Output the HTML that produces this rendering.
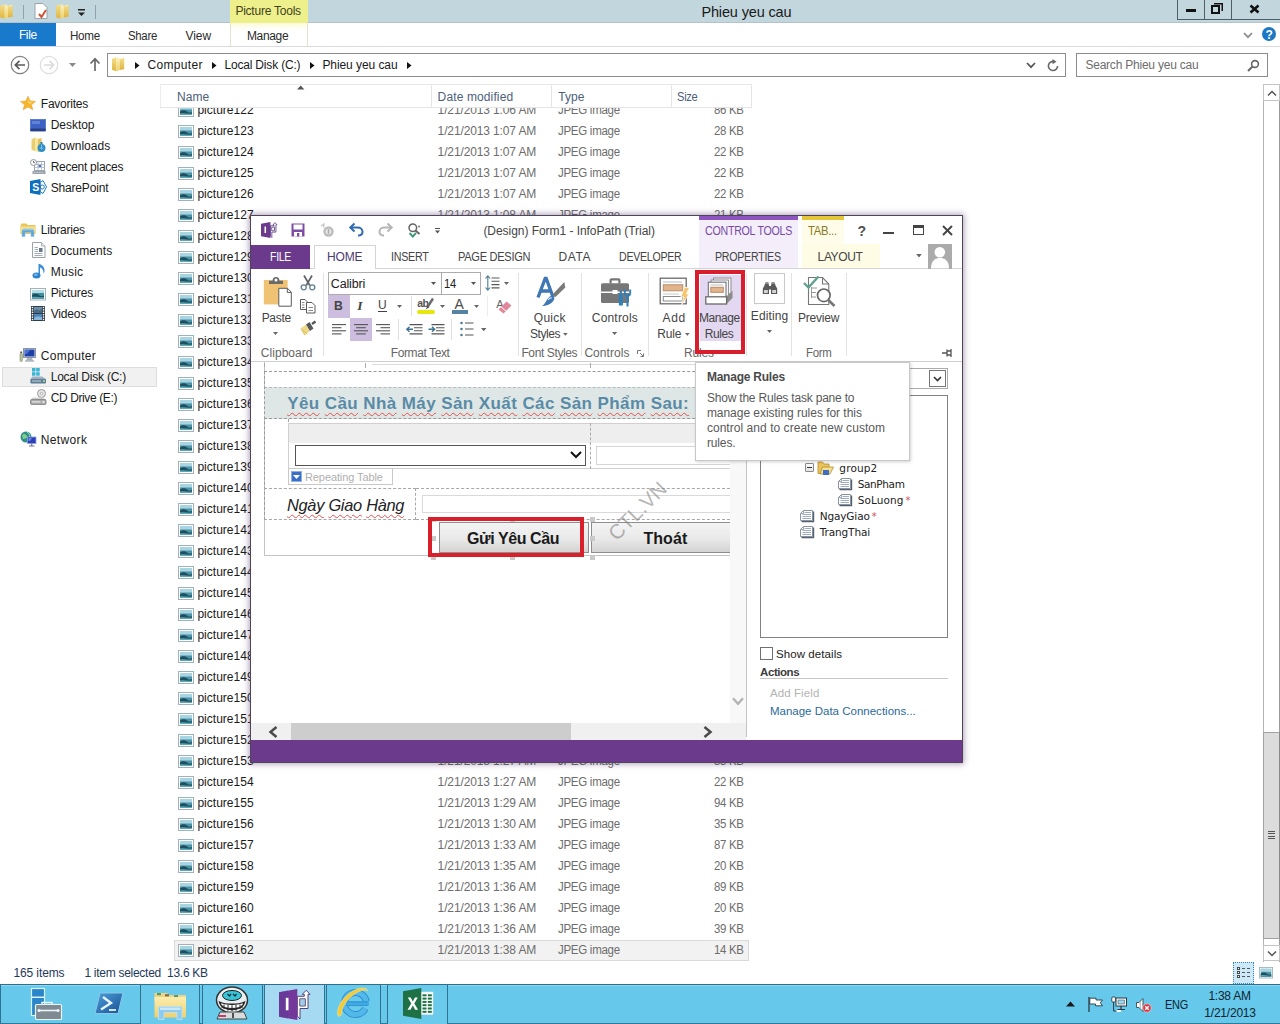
<!DOCTYPE html>
<html lang="vi"><head><meta charset="utf-8"><title>Phieu yeu cau</title>
<style>
html,body{margin:0;padding:0;}
body{width:1280px;height:1024px;overflow:hidden;background:#fff;font-family:"Liberation Sans","DejaVu Sans",sans-serif;}
#root{position:relative;width:1280px;height:1024px;overflow:hidden;background:#fff;}
.b{position:absolute;box-sizing:border-box;}
.t{position:absolute;white-space:pre;}
svg{position:absolute;overflow:visible;}
.sq{text-decoration:underline wavy #e2504c 1.3px;text-underline-offset:2.5px;text-decoration-skip-ink:none;}
</style></head><body><div id="root">
<div class="b" style="left:0px;top:0px;width:1280px;height:23px;background:#c2d6dd;"></div>
<div class="b" style="left:0px;top:22px;width:1280px;height:1px;background:#b3c3c9;"></div>
<svg width="0" height="0" style="left:0;top:0"><defs><linearGradient id="fgA" x1="0" y1="0" x2="0" y2="1"><stop offset="0" stop-color="#f3df8e"/><stop offset="1" stop-color="#dfb440"/></linearGradient><linearGradient id="fgB" x1="0" y1="0" x2="0" y2="1"><stop offset="0" stop-color="#fbf1b8"/><stop offset="1" stop-color="#efd068"/></linearGradient></defs></svg>
<svg style="left:0px;top:3.5px" width="13" height="15" viewBox="0 0 13 15"><path d="M0 1.800L4.500 0.300V14.700L0 13.200Z" fill="url(#fgA)"/><path d="M4.500 0.300L8 1.800V13.500L4.500 14.700Z" fill="url(#fgB)"/><path d="M8 1.800L12.700 0.800V12.800L8 13.500Z" fill="url(#fgA)"/><path d="M8.300 2.200L12.400 1.300" stroke="#fff6cf" stroke-width="0.600"/></svg>
<div class="b" style="left:23px;top:5px;width:1px;height:14px;background:#8fa3ad;"></div>
<svg style="left:34px;top:3px" width="15" height="17" viewBox="0 0 15 17"><path d="M1 .5H9L13 4.500V15.500H1Z" fill="#fff" stroke="#9aa4aa"/><path d="M5 11l2.500 3L12 7" fill="none" stroke="#d2553a" stroke-width="2"/></svg>
<svg style="left:56px;top:3.5px" width="13" height="15" viewBox="0 0 13 15"><path d="M0 1.800L4.500 0.300V14.700L0 13.200Z" fill="url(#fgA)"/><path d="M4.500 0.300L8 1.800V13.500L4.500 14.700Z" fill="url(#fgB)"/><path d="M8 1.800L12.700 0.800V12.800L8 13.500Z" fill="url(#fgA)"/><path d="M8.300 2.200L12.400 1.300" stroke="#fff6cf" stroke-width="0.600"/></svg>
<svg style="left:78px;top:9px" width="8" height="8" viewBox="0 0 8 8"><path d="M0 0H7V1.500H0Z M0 3.500H7L3.500 7Z" fill="#222"/></svg>
<div class="b" style="left:95px;top:5px;width:1px;height:14px;background:#8fa3ad;"></div>
<div class="b" style="left:230px;top:0px;width:77.5px;height:23px;background:#eef08c;"></div>
<span class="t " style="left:235.4px;top:2.5px;font-size:12px;color:#42421c;line-height:16px;letter-spacing:-0.231px;">Picture Tools</span>
<span class="t " style="left:701.4px;top:2.5px;font-size:14.5px;color:#1a1a1a;line-height:18px;letter-spacing:-0.141px;">Phieu yeu cau</span>
<div class="b" style="left:1177px;top:-1px;width:104px;height:21px;border:1px solid #4f5f68;"></div>
<div class="b" style="left:1204px;top:0px;width:1px;height:19px;background:#4f5f68;"></div>
<div class="b" style="left:1231px;top:0px;width:1px;height:19px;background:#4f5f68;"></div>
<div class="b" style="left:1186px;top:9px;width:10px;height:3px;background:#111;"></div>
<svg style="left:1211px;top:3px" width="12" height="11" viewBox="0 0 12 11"><path d="M3 0.750H11.250V8" fill="none" stroke="#111" stroke-width="1.500"/><rect x="1" y="3" width="7" height="7" fill="none" stroke="#111" stroke-width="2"/></svg>
<svg style="left:1249px;top:5px" width="11" height="8" viewBox="0 0 11 8"><path d="M1.500 0.500L9.500 7.500M9.500 .5L1.500 7.500" stroke="#111" stroke-width="2.600"/></svg>
<div class="b" style="left:0px;top:23px;width:1280px;height:24px;background:#fff;"></div>
<div class="b" style="left:0px;top:46px;width:1280px;height:1px;background:#dadbdc;"></div>
<div class="b" style="left:0px;top:23px;width:56px;height:23px;background:#1979ca;"></div>
<span class="t " style="left:18.9px;top:27px;font-size:12px;color:#fff;line-height:16px;letter-spacing:-0.378px;">File</span>
<span class="t " style="left:69.9px;top:27.5px;font-size:12px;color:#2b2b2b;line-height:16px;letter-spacing:-0.3px;transform:scaleX(0.9708);transform-origin:0 50%;">Home</span>
<span class="t " style="left:127.9px;top:27.5px;font-size:12px;color:#2b2b2b;line-height:16px;letter-spacing:-0.3px;transform:scaleX(0.9475);transform-origin:0 50%;">Share</span>
<span class="t " style="left:185.4px;top:27.5px;font-size:12px;color:#2b2b2b;line-height:16px;letter-spacing:-0.031px;">View</span>
<span class="t " style="left:246.9px;top:27.5px;font-size:12px;color:#2b2b2b;line-height:16px;letter-spacing:-0.332px;">Manage</span>
<div class="b" style="left:230px;top:23px;width:77.5px;height:7px;background:linear-gradient(#fbfbd9,#ffffff);"></div>
<div class="b" style="left:230px;top:23px;width:1px;height:23px;background:#e3e3cf;"></div>
<div class="b" style="left:307px;top:23px;width:1px;height:23px;background:#e3e3cf;"></div>
<svg style="left:1242.500px;top:31.500px" width="10" height="7" viewBox="0 0 10 7"><path d="M1 1L5 5.200L9 1" fill="none" stroke="#8a8a8a" stroke-width="1.700"/></svg>
<div class="b" style="left:1262px;top:27px;width:14px;height:14px;background:#1c78c5;border-radius:7px;"></div>
<span class="t " style="left:1265.5px;top:26.5px;font-size:12px;color:#fff;line-height:16px;font-weight:bold;">?</span>
<svg style="left:10px;top:55px" width="20" height="20" viewBox="0 0 20 20"><circle cx="10" cy="10" r="8.700" fill="#fff" stroke="#808080" stroke-width="1.200"/><path d="M15 10H5.500M9.500 5.800L5.300 10L9.500 14.200" fill="none" stroke="#5a5a5a" stroke-width="1.700"/></svg>
<svg style="left:39px;top:55px" width="20" height="20" viewBox="0 0 20 20"><circle cx="10" cy="10" r="8.700" fill="#fff" stroke="#dedede" stroke-width="1.200"/><path d="M5 10H14.500M10.500 5.800L14.700 10L10.500 14.200" fill="none" stroke="#dcdcdc" stroke-width="1.700"/></svg>
<svg style="left:69px;top:63px" width="8" height="5" viewBox="0 0 8 5"><path d="M0 0H7L3.500 4Z" fill="#8a8a8a"/></svg>
<svg style="left:89px;top:57px" width="12" height="15" viewBox="0 0 12 15"><path d="M6 14V2M1.500 6.500L6 1.800L10.500 6.500" fill="none" stroke="#6a6a6a" stroke-width="1.700"/></svg>
<div class="b" style="left:107px;top:53px;width:959px;height:24px;background:#fff;border:1px solid #8c8c8c;"></div>
<svg style="left:112px;top:57px" width="12.5" height="14.5" viewBox="0 0 13 15"><path d="M0 1.800L4.500 0.300V14.700L0 13.200Z" fill="url(#fgA)"/><path d="M4.500 0.300L8 1.800V13.500L4.500 14.700Z" fill="url(#fgB)"/><path d="M8 1.800L12.700 0.800V12.800L8 13.500Z" fill="url(#fgA)"/><path d="M8.300 2.200L12.400 1.300" stroke="#fff6cf" stroke-width="0.600"/></svg>
<svg style="left:135px;top:61.5px" width="5" height="7" viewBox="0 0 5 7"><path d="M0 0L4.500 3.500L0 7Z" fill="#111"/></svg>
<span class="t " style="left:147.4px;top:57px;font-size:12px;color:#1a1a1a;line-height:16px;letter-spacing:0.359px;">Computer</span>
<svg style="left:212px;top:61.5px" width="5" height="7" viewBox="0 0 5 7"><path d="M0 0L4.500 3.500L0 7Z" fill="#111"/></svg>
<span class="t " style="left:224.4px;top:57px;font-size:12px;color:#1a1a1a;line-height:16px;letter-spacing:-0.177px;">Local Disk (C:)</span>
<svg style="left:310px;top:61.5px" width="5" height="7" viewBox="0 0 5 7"><path d="M0 0L4.500 3.500L0 7Z" fill="#111"/></svg>
<span class="t " style="left:322.4px;top:57px;font-size:12px;color:#1a1a1a;line-height:16px;letter-spacing:-0.071px;">Phieu yeu cau</span>
<svg style="left:407px;top:61.5px" width="5" height="7" viewBox="0 0 5 7"><path d="M0 0L4.500 3.500L0 7Z" fill="#111"/></svg>
<svg style="left:1026px;top:62px" width="10" height="7" viewBox="0 0 10 7"><path d="M1 1L5 5.200L9 1" fill="none" stroke="#555" stroke-width="1.700"/></svg>
<svg style="left:1047px;top:59px" width="12" height="13" viewBox="0 0 12 13"><path d="M7.500 2.600A4.600 4.600 0 1 0 10.600 7" fill="none" stroke="#666" stroke-width="1.600"/><path d="M5.500 0L9.500 2.800L5.500 5.200Z" fill="#666"/></svg>
<div class="b" style="left:1076px;top:53px;width:192px;height:24px;background:#fff;border:1px solid #8c8c8c;"></div>
<span class="t " style="left:1085.4px;top:57px;font-size:12px;color:#6d6d6d;line-height:16px;letter-spacing:-0.221px;">Search Phieu yeu cau</span>
<svg style="left:1247px;top:59px" width="13" height="13" viewBox="0 0 13 13"><circle cx="8" cy="5" r="3.400" fill="none" stroke="#666" stroke-width="1.600"/><path d="M5.500 7.500L1 12" stroke="#666" stroke-width="2"/></svg>
<div class="b" style="left:1.5px;top:366.5px;width:155px;height:20.5px;background:#f1f1f1;border:1px solid #dedede;"></div>
<span class="t " style="left:40.8px;top:96px;font-size:12px;color:#1a1a1a;line-height:16px;letter-spacing:-0.243px;">Favorites</span>
<span class="t " style="left:50.699999999999996px;top:117px;font-size:12px;color:#1a1a1a;line-height:16px;letter-spacing:-0.037px;">Desktop</span>
<span class="t " style="left:50.699999999999996px;top:138px;font-size:12px;color:#1a1a1a;line-height:16px;letter-spacing:0.017px;">Downloads</span>
<span class="t " style="left:50.699999999999996px;top:159px;font-size:12px;color:#1a1a1a;line-height:16px;letter-spacing:-0.278px;">Recent places</span>
<span class="t " style="left:50.699999999999996px;top:180px;font-size:12px;color:#1a1a1a;line-height:16px;letter-spacing:-0.174px;">SharePoint</span>
<span class="t " style="left:40.8px;top:222px;font-size:12px;color:#1a1a1a;line-height:16px;letter-spacing:-0.215px;">Libraries</span>
<span class="t " style="left:50.699999999999996px;top:243px;font-size:12px;color:#1a1a1a;line-height:16px;letter-spacing:0.114px;">Documents</span>
<span class="t " style="left:50.699999999999996px;top:264px;font-size:12px;color:#1a1a1a;line-height:16px;letter-spacing:0.266px;">Music</span>
<span class="t " style="left:50.699999999999996px;top:285px;font-size:12px;color:#1a1a1a;line-height:16px;letter-spacing:-0.121px;">Pictures</span>
<span class="t " style="left:50.699999999999996px;top:306px;font-size:12px;color:#1a1a1a;line-height:16px;letter-spacing:-0.155px;">Videos</span>
<span class="t " style="left:40.8px;top:348px;font-size:12px;color:#1a1a1a;line-height:16px;letter-spacing:0.331px;">Computer</span>
<span class="t " style="left:50.699999999999996px;top:369px;font-size:12px;color:#1a1a1a;line-height:16px;letter-spacing:-0.227px;">Local Disk (C:)</span>
<span class="t " style="left:50.699999999999996px;top:390px;font-size:12px;color:#1a1a1a;line-height:16px;letter-spacing:-0.386px;">CD Drive (E:)</span>
<span class="t " style="left:40.8px;top:432px;font-size:12px;color:#1a1a1a;line-height:16px;letter-spacing:0.349px;">Network</span>
<svg style="left:20px;top:96px" width="16" height="14" viewBox="0 0 16 14"><path d="M8 0.300L10.200 4.900L15.500 5.400L11.500 8.800L12.800 13.700L8 11L3.200 13.700L4.500 8.800L0.500 5.400L5.800 4.900Z" fill="#f6b62c" stroke="#e9a23a" stroke-width="0.600"/><path d="M8 2.500L9.300 5.800L12.500 6.200L10 8.300L8 6.500Z" fill="#fbd66b"/></svg>
<svg style="left:30px;top:119px" width="16" height="13" viewBox="0 0 16 13"><rect x="0.500" y="0.500" width="15" height="11" fill="#3d62c4" stroke="#5d7fd0"/><rect x="2" y="2" width="8" height="3" fill="#6d8fe0" opacity=".7"/><rect x="0.500" y="9.500" width="15" height="2.500" fill="#2b3f86"/><rect x="0.500" y="12" width="15" height="1" fill="#9fb0d8"/></svg>
<svg style="left:31px;top:137px" width="15" height="16" viewBox="0 0 15 16"><path d="M0.500 2.500L4 0.500V14L0.500 13Z" fill="#e9cf73"/><path d="M4 0.500L7 2V15L4 14Z" fill="#f7e79c"/><path d="M7 2L10.500 1V13.500L7 15Z" fill="#e3c25a"/><circle cx="10.500" cy="11" r="4" fill="#2f96c9"/><path d="M10.500 5V11M7.800 9.500L10.500 13L13.200 9.500" fill="none" stroke="#2a7fc0" stroke-width="2"/><path d="M10.500 7.500V11.500M8.800 10.300L10.500 12.500L12.200 10.300" fill="none" stroke="#8fd0ec" stroke-width="0.900"/></svg>
<svg style="left:30px;top:159px" width="16" height="16" viewBox="0 0 16 16"><rect x="4.500" y="2.500" width="10" height="9" fill="#fff" stroke="#98a4b0"/><path d="M4.500 5.500H14.500M4.500 8.500H14.500M8 2.500V11.500M11.500 2.500V11.500" stroke="#aab4c0" stroke-width="0.800"/><rect x="8.500" y="6" width="2.500" height="2" fill="#4a78c8"/><circle cx="3.500" cy="3.500" r="3" fill="#fff" stroke="#8a96a3"/><path d="M3.500 1.800V3.700H5" fill="none" stroke="#555" stroke-width="0.800"/><rect x="2.500" y="12" width="13" height="3" fill="#9aa3ab"/><path d="M4 13.500H14" stroke="#d5dade" stroke-width="0.800" stroke-dasharray="1.500 1"/></svg>
<svg style="left:30px;top:179px" width="17" height="16" viewBox="0 0 17 16"><path d="M10 3.500L13 1.500L16.500 8L13 14.500L10 12.500Z" fill="#fff" stroke="#1f7fc4" stroke-width="1"/><circle cx="12.300" cy="8" r="2" fill="none" stroke="#1f7fc4" stroke-width="1"/><path d="M0 2L10.500 0V16L0 14Z" fill="#0f6fbf"/></svg>
<span class="t " style="left:32.3px;top:181px;font-size:10.5px;color:#fff;line-height:12px;font-weight:bold;">S</span>
<svg style="left:20px;top:223px" width="17" height="14" viewBox="0 0 17 14"><path d="M0.500 2.500L1.500 0.500H6.500L7.500 2H15.500V11H0.500Z" fill="#e9c55a"/><path d="M0.500 3.500H15.500V10H0.500Z" fill="#f7e08a"/><path d="M2 13.500V8C2 6.500 3 6 4.500 6H11.500C13 6 14 6.500 14 8V13.500H11V9.500H5V13.500Z" fill="#5da6d8" stroke="#8fc3e6" stroke-width="0.600"/><rect x="2" y="6" width="12" height="1.500" fill="#9fd0ee" opacity=".7"/></svg>
<svg style="left:32px;top:242px" width="14" height="16" viewBox="0 0 14 16"><path d="M0.500 0.500H9.500L13 4V15.500H0.500Z" fill="#fff" stroke="#9aa3ad"/><path d="M9.500 0.500V4H13" fill="#e9edf1" stroke="#9aa3ad" stroke-width="0.800"/><path d="M2.500 5.500H6M2.500 7.500H6M2.500 9.500H6M2.500 11.500H10.500M2.500 13.500H10.500" stroke="#9aa3ad" stroke-width="0.900"/><rect x="7" y="6" width="3.500" height="4" fill="#66758a"/></svg>
<svg style="left:32px;top:263px" width="14" height="16" viewBox="0 0 14 16"><path d="M6.500 12V0.800C9.500 1.500 12.500 3.500 12.500 7.500C12.500 9 12 10 11.500 10.500C11.800 7.500 10 5 8 4.500V12.500Z" fill="#3a8fd4"/><ellipse cx="4.500" cy="12.500" rx="4" ry="3" fill="#2b84d0"/><ellipse cx="3.800" cy="11.700" rx="2" ry="1.200" fill="#7fbdea" opacity=".8"/></svg>
<svg style="left:30px;top:287.5px" width="16" height="12.5" viewBox="0 0 16 12.5"><rect x="0.500" y="0.500" width="15" height="11.500" fill="#fff" stroke="#9fb3bd"/><rect x="2" y="2" width="12" height="8.500" fill="#3f8ea2"/><rect x="2" y="2" width="12" height="3" fill="#b5dbe6"/><path d="M2 7C5 5 7 5.500 9 7S12 8.500 14 7.500V10.500H2Z" fill="#1f4f5c"/><path d="M2 9C6 8 10 10 14 9V10.500H2Z" fill="#5aa7b7"/></svg>
<svg style="left:31px;top:306px" width="14" height="15" viewBox="0 0 14 15"><rect x="0" y="0" width="14" height="15" fill="#2e3d4c"/><rect x="3" y="1" width="8" height="6" fill="#6f8fa8"/><rect x="3" y="8" width="8" height="6" fill="#4f86b8"/><path d="M3 5L6 3L8 4.500L11 2.500V7H3Z" fill="#4b6a84"/><path d="M3 12.500C5 10 8 10 11 11.500V14H3Z" fill="#8ab8dc"/><rect x="0.800" y="0.8" width="1.400" height="1.400" fill="#fff"/><rect x="11.800" y="0.8" width="1.400" height="1.400" fill="#fff"/><rect x="0.800" y="3.2" width="1.400" height="1.400" fill="#fff"/><rect x="11.800" y="3.2" width="1.400" height="1.400" fill="#fff"/><rect x="0.800" y="5.6" width="1.400" height="1.400" fill="#fff"/><rect x="11.800" y="5.6" width="1.400" height="1.400" fill="#fff"/><rect x="0.800" y="7.999999999999999" width="1.400" height="1.400" fill="#fff"/><rect x="11.800" y="7.999999999999999" width="1.400" height="1.400" fill="#fff"/><rect x="0.800" y="10.4" width="1.400" height="1.400" fill="#fff"/><rect x="11.800" y="10.4" width="1.400" height="1.400" fill="#fff"/><rect x="0.800" y="12.8" width="1.400" height="1.400" fill="#fff"/><rect x="11.800" y="12.8" width="1.400" height="1.400" fill="#fff"/></svg>
<svg style="left:19px;top:348px" width="18" height="14" viewBox="0 0 18 14"><rect x="4.500" y="0.500" width="12" height="9" fill="#dfe4ea" stroke="#8b95a3"/><rect x="5.500" y="1.500" width="10" height="7" fill="#1f3fa8"/><path d="M6 2H11L8 6H6Z" fill="#4f74d8"/><path d="M8 10H13L14 12.500H7Z" fill="#aab2bc"/><rect x="6" y="12.500" width="9" height="1" fill="#8b95a3"/><rect x="1" y="5" width="2.400" height="8.500" rx="1" fill="#b8c79a" stroke="#7f8a6a" stroke-width="0.600"/><rect x="1.300" y="3.500" width="1.800" height="1.500" fill="#555"/></svg>
<svg style="left:30px;top:368px" width="17" height="16" viewBox="0 0 17 16"><rect x="2" y="0" width="3.500" height="3.500" fill="#35b4d6"/><rect x="6.200" y="0" width="3.500" height="3.500" fill="#35b4d6"/><rect x="2" y="4.200" width="3.500" height="3.500" fill="#35b4d6"/><rect x="6.200" y="4.200" width="3.500" height="3.500" fill="#35b4d6"/><path d="M2.500 8.500H12L16 11V15H0.500V11Z" fill="#9eb0bf"/><rect x="0.500" y="11" width="15.500" height="4.500" rx="1" fill="#5f7f98"/><rect x="2" y="12.500" width="9" height="1" fill="#c5d3de"/><rect x="13" y="12.200" width="1.800" height="1.800" fill="#9fe08a"/></svg>
<svg style="left:30px;top:389px" width="17" height="16" viewBox="0 0 17 16"><circle cx="11.500" cy="4.500" r="4" fill="#e6e6e6" stroke="#9a9a9a"/><circle cx="11.500" cy="4.500" r="1.200" fill="#fff" stroke="#9a9a9a" stroke-width="0.700"/><path d="M2.500 8.500H13L16 11V15H0.500V11Z" fill="#cfcfcf"/><rect x="0.500" y="10.500" width="15.500" height="5" rx="1.200" fill="#a9a9a9" stroke="#7f7f7f" stroke-width="0.800"/><rect x="2" y="12.300" width="8.500" height="1.200" fill="#e8e8e8"/><rect x="12.500" y="12" width="2" height="2" fill="#e8e8e8"/></svg>
<svg style="left:20px;top:431px" width="17" height="16" viewBox="0 0 17 16"><circle cx="6" cy="6" r="5.500" fill="#2f8f8a"/><path d="M2 4C4 2 6 3 7 5S5 8 3 8Z" fill="#7fd08a"/><path d="M7 1C9 2 10 4 9.500 6" fill="none" stroke="#9fe0c0" stroke-width="1"/><rect x="7.500" y="6" width="8.500" height="6.500" fill="#2a3fb8" stroke="#8fa0e0" stroke-width="0.800"/><path d="M8.500 7H12L10 10H8.500Z" fill="#6f88e8"/><path d="M11.700 12.500V14.500M9 15H14.500" stroke="#6a74a8" stroke-width="1.200"/></svg>
<div class="b" style="left:160px;top:84px;width:592px;height:1px;background:#e8e8e8;"></div>
<div class="b" style="left:160px;top:85px;width:1px;height:24px;background:#ececec;"></div>
<span class="t " style="left:176.9px;top:89px;font-size:12px;color:#4c607a;line-height:16px;letter-spacing:0.131px;">Name</span>
<span class="t " style="left:437.59999999999997px;top:89px;font-size:12px;color:#4c607a;line-height:16px;letter-spacing:0.122px;">Date modified</span>
<span class="t " style="left:558.3px;top:89px;font-size:12px;color:#4c607a;line-height:16px;letter-spacing:0.062px;">Type</span>
<span class="t " style="left:677.4px;top:89px;font-size:12px;color:#4c607a;line-height:16px;letter-spacing:-0.3px;transform:scaleX(0.9268);transform-origin:0 50%;">Size</span>
<svg style="left:297px;top:85px" width="8" height="5" viewBox="0 0 8 5"><path d="M0 4.500L3.700 0.500L7.400 4.500Z" fill="#555"/></svg>
<div class="b" style="left:174px;top:940px;width:575px;height:21px;background:#f2f2f2;border:1px solid #dadada;"></div>
<svg style="left:178px;top:103.5px" width="16" height="13" viewBox="0 0 16 13"><rect x="0.500" y="0.500" width="15" height="12" fill="#fff" stroke="#9fb3bd"/><rect x="2" y="2" width="12" height="9" fill="#4a93a8"/><rect x="2" y="2" width="12" height="3.500" fill="#a9d4e2"/><path d="M2 7.500C5 5.500 7 6 9 7.500S12 9 14 8V11H2Z" fill="#1f4f5c"/><path d="M2 9.500C6 8.500 10 10.500 14 9.500V11H2Z" fill="#5aa7b7"/></svg>
<span class="t " style="left:197.4px;top:102px;font-size:12px;color:#1a1a1a;line-height:16px;letter-spacing:0.018px;">picture122</span>
<span class="t " style="left:437.59999999999997px;top:102px;font-size:12px;color:#6d6d6d;line-height:16px;letter-spacing:-0.127px;">1/21/2013 1:06 AM</span>
<span class="t " style="left:557.5px;top:102px;font-size:12px;color:#6d6d6d;line-height:16px;letter-spacing:-0.3px;transform:scaleX(0.9604);transform-origin:0 50%;">JPEG image</span>
<span class="t " style="left:714.3px;top:102px;font-size:12px;color:#6d6d6d;line-height:16px;letter-spacing:-0.3px;transform:scaleX(0.9527);transform-origin:0 50%;">86 KB</span>
<svg style="left:178px;top:124.5px" width="16" height="13" viewBox="0 0 16 13"><rect x="0.500" y="0.500" width="15" height="12" fill="#fff" stroke="#9fb3bd"/><rect x="2" y="2" width="12" height="9" fill="#4a93a8"/><rect x="2" y="2" width="12" height="3.500" fill="#a9d4e2"/><path d="M2 7.500C5 5.500 7 6 9 7.500S12 9 14 8V11H2Z" fill="#1f4f5c"/><path d="M2 9.500C6 8.500 10 10.500 14 9.500V11H2Z" fill="#5aa7b7"/></svg>
<span class="t " style="left:197.4px;top:123px;font-size:12px;color:#1a1a1a;line-height:16px;letter-spacing:0.018px;">picture123</span>
<span class="t " style="left:437.59999999999997px;top:123px;font-size:12px;color:#6d6d6d;line-height:16px;letter-spacing:-0.127px;">1/21/2013 1:07 AM</span>
<span class="t " style="left:557.5px;top:123px;font-size:12px;color:#6d6d6d;line-height:16px;letter-spacing:-0.3px;transform:scaleX(0.9604);transform-origin:0 50%;">JPEG image</span>
<span class="t " style="left:714.3px;top:123px;font-size:12px;color:#6d6d6d;line-height:16px;letter-spacing:-0.3px;transform:scaleX(0.9527);transform-origin:0 50%;">28 KB</span>
<svg style="left:178px;top:145.5px" width="16" height="13" viewBox="0 0 16 13"><rect x="0.500" y="0.500" width="15" height="12" fill="#fff" stroke="#9fb3bd"/><rect x="2" y="2" width="12" height="9" fill="#4a93a8"/><rect x="2" y="2" width="12" height="3.500" fill="#a9d4e2"/><path d="M2 7.500C5 5.500 7 6 9 7.500S12 9 14 8V11H2Z" fill="#1f4f5c"/><path d="M2 9.500C6 8.500 10 10.500 14 9.500V11H2Z" fill="#5aa7b7"/></svg>
<span class="t " style="left:197.4px;top:144px;font-size:12px;color:#1a1a1a;line-height:16px;letter-spacing:0.018px;">picture124</span>
<span class="t " style="left:437.59999999999997px;top:144px;font-size:12px;color:#6d6d6d;line-height:16px;letter-spacing:-0.127px;">1/21/2013 1:07 AM</span>
<span class="t " style="left:557.5px;top:144px;font-size:12px;color:#6d6d6d;line-height:16px;letter-spacing:-0.3px;transform:scaleX(0.9604);transform-origin:0 50%;">JPEG image</span>
<span class="t " style="left:714.3px;top:144px;font-size:12px;color:#6d6d6d;line-height:16px;letter-spacing:-0.3px;transform:scaleX(0.9527);transform-origin:0 50%;">22 KB</span>
<svg style="left:178px;top:166.5px" width="16" height="13" viewBox="0 0 16 13"><rect x="0.500" y="0.500" width="15" height="12" fill="#fff" stroke="#9fb3bd"/><rect x="2" y="2" width="12" height="9" fill="#4a93a8"/><rect x="2" y="2" width="12" height="3.500" fill="#a9d4e2"/><path d="M2 7.500C5 5.500 7 6 9 7.500S12 9 14 8V11H2Z" fill="#1f4f5c"/><path d="M2 9.500C6 8.500 10 10.500 14 9.500V11H2Z" fill="#5aa7b7"/></svg>
<span class="t " style="left:197.4px;top:165px;font-size:12px;color:#1a1a1a;line-height:16px;letter-spacing:0.018px;">picture125</span>
<span class="t " style="left:437.59999999999997px;top:165px;font-size:12px;color:#6d6d6d;line-height:16px;letter-spacing:-0.127px;">1/21/2013 1:07 AM</span>
<span class="t " style="left:557.5px;top:165px;font-size:12px;color:#6d6d6d;line-height:16px;letter-spacing:-0.3px;transform:scaleX(0.9604);transform-origin:0 50%;">JPEG image</span>
<span class="t " style="left:714.3px;top:165px;font-size:12px;color:#6d6d6d;line-height:16px;letter-spacing:-0.3px;transform:scaleX(0.9527);transform-origin:0 50%;">22 KB</span>
<svg style="left:178px;top:187.5px" width="16" height="13" viewBox="0 0 16 13"><rect x="0.500" y="0.500" width="15" height="12" fill="#fff" stroke="#9fb3bd"/><rect x="2" y="2" width="12" height="9" fill="#4a93a8"/><rect x="2" y="2" width="12" height="3.500" fill="#a9d4e2"/><path d="M2 7.500C5 5.500 7 6 9 7.500S12 9 14 8V11H2Z" fill="#1f4f5c"/><path d="M2 9.500C6 8.500 10 10.500 14 9.500V11H2Z" fill="#5aa7b7"/></svg>
<span class="t " style="left:197.4px;top:186px;font-size:12px;color:#1a1a1a;line-height:16px;letter-spacing:0.018px;">picture126</span>
<span class="t " style="left:437.59999999999997px;top:186px;font-size:12px;color:#6d6d6d;line-height:16px;letter-spacing:-0.127px;">1/21/2013 1:07 AM</span>
<span class="t " style="left:557.5px;top:186px;font-size:12px;color:#6d6d6d;line-height:16px;letter-spacing:-0.3px;transform:scaleX(0.9604);transform-origin:0 50%;">JPEG image</span>
<span class="t " style="left:714.3px;top:186px;font-size:12px;color:#6d6d6d;line-height:16px;letter-spacing:-0.3px;transform:scaleX(0.9527);transform-origin:0 50%;">22 KB</span>
<svg style="left:178px;top:208.5px" width="16" height="13" viewBox="0 0 16 13"><rect x="0.500" y="0.500" width="15" height="12" fill="#fff" stroke="#9fb3bd"/><rect x="2" y="2" width="12" height="9" fill="#4a93a8"/><rect x="2" y="2" width="12" height="3.500" fill="#a9d4e2"/><path d="M2 7.500C5 5.500 7 6 9 7.500S12 9 14 8V11H2Z" fill="#1f4f5c"/><path d="M2 9.500C6 8.500 10 10.500 14 9.500V11H2Z" fill="#5aa7b7"/></svg>
<span class="t " style="left:197.4px;top:207px;font-size:12px;color:#1a1a1a;line-height:16px;letter-spacing:0.018px;">picture127</span>
<span class="t " style="left:437.59999999999997px;top:207px;font-size:12px;color:#6d6d6d;line-height:16px;letter-spacing:-0.127px;">1/21/2013 1:08 AM</span>
<span class="t " style="left:557.5px;top:207px;font-size:12px;color:#6d6d6d;line-height:16px;letter-spacing:-0.3px;transform:scaleX(0.9604);transform-origin:0 50%;">JPEG image</span>
<span class="t " style="left:714.3px;top:207px;font-size:12px;color:#6d6d6d;line-height:16px;letter-spacing:-0.3px;transform:scaleX(0.9527);transform-origin:0 50%;">21 KB</span>
<svg style="left:178px;top:229.5px" width="16" height="13" viewBox="0 0 16 13"><rect x="0.500" y="0.500" width="15" height="12" fill="#fff" stroke="#9fb3bd"/><rect x="2" y="2" width="12" height="9" fill="#4a93a8"/><rect x="2" y="2" width="12" height="3.500" fill="#a9d4e2"/><path d="M2 7.500C5 5.500 7 6 9 7.500S12 9 14 8V11H2Z" fill="#1f4f5c"/><path d="M2 9.500C6 8.500 10 10.500 14 9.500V11H2Z" fill="#5aa7b7"/></svg>
<span class="t " style="left:197.4px;top:228px;font-size:12px;color:#1a1a1a;line-height:16px;letter-spacing:0.018px;">picture128</span>
<svg style="left:178px;top:250.5px" width="16" height="13" viewBox="0 0 16 13"><rect x="0.500" y="0.500" width="15" height="12" fill="#fff" stroke="#9fb3bd"/><rect x="2" y="2" width="12" height="9" fill="#4a93a8"/><rect x="2" y="2" width="12" height="3.500" fill="#a9d4e2"/><path d="M2 7.500C5 5.500 7 6 9 7.500S12 9 14 8V11H2Z" fill="#1f4f5c"/><path d="M2 9.500C6 8.500 10 10.500 14 9.500V11H2Z" fill="#5aa7b7"/></svg>
<span class="t " style="left:197.4px;top:249px;font-size:12px;color:#1a1a1a;line-height:16px;letter-spacing:0.018px;">picture129</span>
<svg style="left:178px;top:271.5px" width="16" height="13" viewBox="0 0 16 13"><rect x="0.500" y="0.500" width="15" height="12" fill="#fff" stroke="#9fb3bd"/><rect x="2" y="2" width="12" height="9" fill="#4a93a8"/><rect x="2" y="2" width="12" height="3.500" fill="#a9d4e2"/><path d="M2 7.500C5 5.500 7 6 9 7.500S12 9 14 8V11H2Z" fill="#1f4f5c"/><path d="M2 9.500C6 8.500 10 10.500 14 9.500V11H2Z" fill="#5aa7b7"/></svg>
<span class="t " style="left:197.4px;top:270px;font-size:12px;color:#1a1a1a;line-height:16px;letter-spacing:0.018px;">picture130</span>
<svg style="left:178px;top:292.5px" width="16" height="13" viewBox="0 0 16 13"><rect x="0.500" y="0.500" width="15" height="12" fill="#fff" stroke="#9fb3bd"/><rect x="2" y="2" width="12" height="9" fill="#4a93a8"/><rect x="2" y="2" width="12" height="3.500" fill="#a9d4e2"/><path d="M2 7.500C5 5.500 7 6 9 7.500S12 9 14 8V11H2Z" fill="#1f4f5c"/><path d="M2 9.500C6 8.500 10 10.500 14 9.500V11H2Z" fill="#5aa7b7"/></svg>
<span class="t " style="left:197.4px;top:291px;font-size:12px;color:#1a1a1a;line-height:16px;letter-spacing:0.018px;">picture131</span>
<svg style="left:178px;top:313.5px" width="16" height="13" viewBox="0 0 16 13"><rect x="0.500" y="0.500" width="15" height="12" fill="#fff" stroke="#9fb3bd"/><rect x="2" y="2" width="12" height="9" fill="#4a93a8"/><rect x="2" y="2" width="12" height="3.500" fill="#a9d4e2"/><path d="M2 7.500C5 5.500 7 6 9 7.500S12 9 14 8V11H2Z" fill="#1f4f5c"/><path d="M2 9.500C6 8.500 10 10.500 14 9.500V11H2Z" fill="#5aa7b7"/></svg>
<span class="t " style="left:197.4px;top:312px;font-size:12px;color:#1a1a1a;line-height:16px;letter-spacing:0.018px;">picture132</span>
<svg style="left:178px;top:334.5px" width="16" height="13" viewBox="0 0 16 13"><rect x="0.500" y="0.500" width="15" height="12" fill="#fff" stroke="#9fb3bd"/><rect x="2" y="2" width="12" height="9" fill="#4a93a8"/><rect x="2" y="2" width="12" height="3.500" fill="#a9d4e2"/><path d="M2 7.500C5 5.500 7 6 9 7.500S12 9 14 8V11H2Z" fill="#1f4f5c"/><path d="M2 9.500C6 8.500 10 10.500 14 9.500V11H2Z" fill="#5aa7b7"/></svg>
<span class="t " style="left:197.4px;top:333px;font-size:12px;color:#1a1a1a;line-height:16px;letter-spacing:0.018px;">picture133</span>
<svg style="left:178px;top:355.5px" width="16" height="13" viewBox="0 0 16 13"><rect x="0.500" y="0.500" width="15" height="12" fill="#fff" stroke="#9fb3bd"/><rect x="2" y="2" width="12" height="9" fill="#4a93a8"/><rect x="2" y="2" width="12" height="3.500" fill="#a9d4e2"/><path d="M2 7.500C5 5.500 7 6 9 7.500S12 9 14 8V11H2Z" fill="#1f4f5c"/><path d="M2 9.500C6 8.500 10 10.500 14 9.500V11H2Z" fill="#5aa7b7"/></svg>
<span class="t " style="left:197.4px;top:354px;font-size:12px;color:#1a1a1a;line-height:16px;letter-spacing:0.018px;">picture134</span>
<svg style="left:178px;top:376.5px" width="16" height="13" viewBox="0 0 16 13"><rect x="0.500" y="0.500" width="15" height="12" fill="#fff" stroke="#9fb3bd"/><rect x="2" y="2" width="12" height="9" fill="#4a93a8"/><rect x="2" y="2" width="12" height="3.500" fill="#a9d4e2"/><path d="M2 7.500C5 5.500 7 6 9 7.500S12 9 14 8V11H2Z" fill="#1f4f5c"/><path d="M2 9.500C6 8.500 10 10.500 14 9.500V11H2Z" fill="#5aa7b7"/></svg>
<span class="t " style="left:197.4px;top:375px;font-size:12px;color:#1a1a1a;line-height:16px;letter-spacing:0.018px;">picture135</span>
<svg style="left:178px;top:397.5px" width="16" height="13" viewBox="0 0 16 13"><rect x="0.500" y="0.500" width="15" height="12" fill="#fff" stroke="#9fb3bd"/><rect x="2" y="2" width="12" height="9" fill="#4a93a8"/><rect x="2" y="2" width="12" height="3.500" fill="#a9d4e2"/><path d="M2 7.500C5 5.500 7 6 9 7.500S12 9 14 8V11H2Z" fill="#1f4f5c"/><path d="M2 9.500C6 8.500 10 10.500 14 9.500V11H2Z" fill="#5aa7b7"/></svg>
<span class="t " style="left:197.4px;top:396px;font-size:12px;color:#1a1a1a;line-height:16px;letter-spacing:0.018px;">picture136</span>
<svg style="left:178px;top:418.5px" width="16" height="13" viewBox="0 0 16 13"><rect x="0.500" y="0.500" width="15" height="12" fill="#fff" stroke="#9fb3bd"/><rect x="2" y="2" width="12" height="9" fill="#4a93a8"/><rect x="2" y="2" width="12" height="3.500" fill="#a9d4e2"/><path d="M2 7.500C5 5.500 7 6 9 7.500S12 9 14 8V11H2Z" fill="#1f4f5c"/><path d="M2 9.500C6 8.500 10 10.500 14 9.500V11H2Z" fill="#5aa7b7"/></svg>
<span class="t " style="left:197.4px;top:417px;font-size:12px;color:#1a1a1a;line-height:16px;letter-spacing:0.018px;">picture137</span>
<svg style="left:178px;top:439.5px" width="16" height="13" viewBox="0 0 16 13"><rect x="0.500" y="0.500" width="15" height="12" fill="#fff" stroke="#9fb3bd"/><rect x="2" y="2" width="12" height="9" fill="#4a93a8"/><rect x="2" y="2" width="12" height="3.500" fill="#a9d4e2"/><path d="M2 7.500C5 5.500 7 6 9 7.500S12 9 14 8V11H2Z" fill="#1f4f5c"/><path d="M2 9.500C6 8.500 10 10.500 14 9.500V11H2Z" fill="#5aa7b7"/></svg>
<span class="t " style="left:197.4px;top:438px;font-size:12px;color:#1a1a1a;line-height:16px;letter-spacing:0.018px;">picture138</span>
<svg style="left:178px;top:460.5px" width="16" height="13" viewBox="0 0 16 13"><rect x="0.500" y="0.500" width="15" height="12" fill="#fff" stroke="#9fb3bd"/><rect x="2" y="2" width="12" height="9" fill="#4a93a8"/><rect x="2" y="2" width="12" height="3.500" fill="#a9d4e2"/><path d="M2 7.500C5 5.500 7 6 9 7.500S12 9 14 8V11H2Z" fill="#1f4f5c"/><path d="M2 9.500C6 8.500 10 10.500 14 9.500V11H2Z" fill="#5aa7b7"/></svg>
<span class="t " style="left:197.4px;top:459px;font-size:12px;color:#1a1a1a;line-height:16px;letter-spacing:0.018px;">picture139</span>
<svg style="left:178px;top:481.5px" width="16" height="13" viewBox="0 0 16 13"><rect x="0.500" y="0.500" width="15" height="12" fill="#fff" stroke="#9fb3bd"/><rect x="2" y="2" width="12" height="9" fill="#4a93a8"/><rect x="2" y="2" width="12" height="3.500" fill="#a9d4e2"/><path d="M2 7.500C5 5.500 7 6 9 7.500S12 9 14 8V11H2Z" fill="#1f4f5c"/><path d="M2 9.500C6 8.500 10 10.500 14 9.500V11H2Z" fill="#5aa7b7"/></svg>
<span class="t " style="left:197.4px;top:480px;font-size:12px;color:#1a1a1a;line-height:16px;letter-spacing:0.018px;">picture140</span>
<svg style="left:178px;top:502.5px" width="16" height="13" viewBox="0 0 16 13"><rect x="0.500" y="0.500" width="15" height="12" fill="#fff" stroke="#9fb3bd"/><rect x="2" y="2" width="12" height="9" fill="#4a93a8"/><rect x="2" y="2" width="12" height="3.500" fill="#a9d4e2"/><path d="M2 7.500C5 5.500 7 6 9 7.500S12 9 14 8V11H2Z" fill="#1f4f5c"/><path d="M2 9.500C6 8.500 10 10.500 14 9.500V11H2Z" fill="#5aa7b7"/></svg>
<span class="t " style="left:197.4px;top:501px;font-size:12px;color:#1a1a1a;line-height:16px;letter-spacing:0.018px;">picture141</span>
<svg style="left:178px;top:523.5px" width="16" height="13" viewBox="0 0 16 13"><rect x="0.500" y="0.500" width="15" height="12" fill="#fff" stroke="#9fb3bd"/><rect x="2" y="2" width="12" height="9" fill="#4a93a8"/><rect x="2" y="2" width="12" height="3.500" fill="#a9d4e2"/><path d="M2 7.500C5 5.500 7 6 9 7.500S12 9 14 8V11H2Z" fill="#1f4f5c"/><path d="M2 9.500C6 8.500 10 10.500 14 9.500V11H2Z" fill="#5aa7b7"/></svg>
<span class="t " style="left:197.4px;top:522px;font-size:12px;color:#1a1a1a;line-height:16px;letter-spacing:0.018px;">picture142</span>
<svg style="left:178px;top:544.5px" width="16" height="13" viewBox="0 0 16 13"><rect x="0.500" y="0.500" width="15" height="12" fill="#fff" stroke="#9fb3bd"/><rect x="2" y="2" width="12" height="9" fill="#4a93a8"/><rect x="2" y="2" width="12" height="3.500" fill="#a9d4e2"/><path d="M2 7.500C5 5.500 7 6 9 7.500S12 9 14 8V11H2Z" fill="#1f4f5c"/><path d="M2 9.500C6 8.500 10 10.500 14 9.500V11H2Z" fill="#5aa7b7"/></svg>
<span class="t " style="left:197.4px;top:543px;font-size:12px;color:#1a1a1a;line-height:16px;letter-spacing:0.018px;">picture143</span>
<svg style="left:178px;top:565.5px" width="16" height="13" viewBox="0 0 16 13"><rect x="0.500" y="0.500" width="15" height="12" fill="#fff" stroke="#9fb3bd"/><rect x="2" y="2" width="12" height="9" fill="#4a93a8"/><rect x="2" y="2" width="12" height="3.500" fill="#a9d4e2"/><path d="M2 7.500C5 5.500 7 6 9 7.500S12 9 14 8V11H2Z" fill="#1f4f5c"/><path d="M2 9.500C6 8.500 10 10.500 14 9.500V11H2Z" fill="#5aa7b7"/></svg>
<span class="t " style="left:197.4px;top:564px;font-size:12px;color:#1a1a1a;line-height:16px;letter-spacing:0.018px;">picture144</span>
<svg style="left:178px;top:586.5px" width="16" height="13" viewBox="0 0 16 13"><rect x="0.500" y="0.500" width="15" height="12" fill="#fff" stroke="#9fb3bd"/><rect x="2" y="2" width="12" height="9" fill="#4a93a8"/><rect x="2" y="2" width="12" height="3.500" fill="#a9d4e2"/><path d="M2 7.500C5 5.500 7 6 9 7.500S12 9 14 8V11H2Z" fill="#1f4f5c"/><path d="M2 9.500C6 8.500 10 10.500 14 9.500V11H2Z" fill="#5aa7b7"/></svg>
<span class="t " style="left:197.4px;top:585px;font-size:12px;color:#1a1a1a;line-height:16px;letter-spacing:0.018px;">picture145</span>
<svg style="left:178px;top:607.5px" width="16" height="13" viewBox="0 0 16 13"><rect x="0.500" y="0.500" width="15" height="12" fill="#fff" stroke="#9fb3bd"/><rect x="2" y="2" width="12" height="9" fill="#4a93a8"/><rect x="2" y="2" width="12" height="3.500" fill="#a9d4e2"/><path d="M2 7.500C5 5.500 7 6 9 7.500S12 9 14 8V11H2Z" fill="#1f4f5c"/><path d="M2 9.500C6 8.500 10 10.500 14 9.500V11H2Z" fill="#5aa7b7"/></svg>
<span class="t " style="left:197.4px;top:606px;font-size:12px;color:#1a1a1a;line-height:16px;letter-spacing:0.018px;">picture146</span>
<svg style="left:178px;top:628.5px" width="16" height="13" viewBox="0 0 16 13"><rect x="0.500" y="0.500" width="15" height="12" fill="#fff" stroke="#9fb3bd"/><rect x="2" y="2" width="12" height="9" fill="#4a93a8"/><rect x="2" y="2" width="12" height="3.500" fill="#a9d4e2"/><path d="M2 7.500C5 5.500 7 6 9 7.500S12 9 14 8V11H2Z" fill="#1f4f5c"/><path d="M2 9.500C6 8.500 10 10.500 14 9.500V11H2Z" fill="#5aa7b7"/></svg>
<span class="t " style="left:197.4px;top:627px;font-size:12px;color:#1a1a1a;line-height:16px;letter-spacing:0.018px;">picture147</span>
<svg style="left:178px;top:649.5px" width="16" height="13" viewBox="0 0 16 13"><rect x="0.500" y="0.500" width="15" height="12" fill="#fff" stroke="#9fb3bd"/><rect x="2" y="2" width="12" height="9" fill="#4a93a8"/><rect x="2" y="2" width="12" height="3.500" fill="#a9d4e2"/><path d="M2 7.500C5 5.500 7 6 9 7.500S12 9 14 8V11H2Z" fill="#1f4f5c"/><path d="M2 9.500C6 8.500 10 10.500 14 9.500V11H2Z" fill="#5aa7b7"/></svg>
<span class="t " style="left:197.4px;top:648px;font-size:12px;color:#1a1a1a;line-height:16px;letter-spacing:0.018px;">picture148</span>
<svg style="left:178px;top:670.5px" width="16" height="13" viewBox="0 0 16 13"><rect x="0.500" y="0.500" width="15" height="12" fill="#fff" stroke="#9fb3bd"/><rect x="2" y="2" width="12" height="9" fill="#4a93a8"/><rect x="2" y="2" width="12" height="3.500" fill="#a9d4e2"/><path d="M2 7.500C5 5.500 7 6 9 7.500S12 9 14 8V11H2Z" fill="#1f4f5c"/><path d="M2 9.500C6 8.500 10 10.500 14 9.500V11H2Z" fill="#5aa7b7"/></svg>
<span class="t " style="left:197.4px;top:669px;font-size:12px;color:#1a1a1a;line-height:16px;letter-spacing:0.018px;">picture149</span>
<svg style="left:178px;top:691.5px" width="16" height="13" viewBox="0 0 16 13"><rect x="0.500" y="0.500" width="15" height="12" fill="#fff" stroke="#9fb3bd"/><rect x="2" y="2" width="12" height="9" fill="#4a93a8"/><rect x="2" y="2" width="12" height="3.500" fill="#a9d4e2"/><path d="M2 7.500C5 5.500 7 6 9 7.500S12 9 14 8V11H2Z" fill="#1f4f5c"/><path d="M2 9.500C6 8.500 10 10.500 14 9.500V11H2Z" fill="#5aa7b7"/></svg>
<span class="t " style="left:197.4px;top:690px;font-size:12px;color:#1a1a1a;line-height:16px;letter-spacing:0.018px;">picture150</span>
<svg style="left:178px;top:712.5px" width="16" height="13" viewBox="0 0 16 13"><rect x="0.500" y="0.500" width="15" height="12" fill="#fff" stroke="#9fb3bd"/><rect x="2" y="2" width="12" height="9" fill="#4a93a8"/><rect x="2" y="2" width="12" height="3.500" fill="#a9d4e2"/><path d="M2 7.500C5 5.500 7 6 9 7.500S12 9 14 8V11H2Z" fill="#1f4f5c"/><path d="M2 9.500C6 8.500 10 10.500 14 9.500V11H2Z" fill="#5aa7b7"/></svg>
<span class="t " style="left:197.4px;top:711px;font-size:12px;color:#1a1a1a;line-height:16px;letter-spacing:0.018px;">picture151</span>
<svg style="left:178px;top:733.5px" width="16" height="13" viewBox="0 0 16 13"><rect x="0.500" y="0.500" width="15" height="12" fill="#fff" stroke="#9fb3bd"/><rect x="2" y="2" width="12" height="9" fill="#4a93a8"/><rect x="2" y="2" width="12" height="3.500" fill="#a9d4e2"/><path d="M2 7.500C5 5.500 7 6 9 7.500S12 9 14 8V11H2Z" fill="#1f4f5c"/><path d="M2 9.500C6 8.500 10 10.500 14 9.500V11H2Z" fill="#5aa7b7"/></svg>
<span class="t " style="left:197.4px;top:732px;font-size:12px;color:#1a1a1a;line-height:16px;letter-spacing:0.018px;">picture152</span>
<svg style="left:178px;top:754.5px" width="16" height="13" viewBox="0 0 16 13"><rect x="0.500" y="0.500" width="15" height="12" fill="#fff" stroke="#9fb3bd"/><rect x="2" y="2" width="12" height="9" fill="#4a93a8"/><rect x="2" y="2" width="12" height="3.500" fill="#a9d4e2"/><path d="M2 7.500C5 5.500 7 6 9 7.500S12 9 14 8V11H2Z" fill="#1f4f5c"/><path d="M2 9.500C6 8.500 10 10.500 14 9.500V11H2Z" fill="#5aa7b7"/></svg>
<span class="t " style="left:197.4px;top:753px;font-size:12px;color:#1a1a1a;line-height:16px;letter-spacing:0.018px;">picture153</span>
<span class="t " style="left:437.59999999999997px;top:753px;font-size:12px;color:#6d6d6d;line-height:16px;letter-spacing:-0.127px;">1/21/2013 1:27 AM</span>
<span class="t " style="left:557.5px;top:753px;font-size:12px;color:#6d6d6d;line-height:16px;letter-spacing:-0.3px;transform:scaleX(0.9604);transform-origin:0 50%;">JPEG image</span>
<span class="t " style="left:714.3px;top:753px;font-size:12px;color:#6d6d6d;line-height:16px;letter-spacing:-0.3px;transform:scaleX(0.9527);transform-origin:0 50%;">33 KB</span>
<svg style="left:178px;top:775.5px" width="16" height="13" viewBox="0 0 16 13"><rect x="0.500" y="0.500" width="15" height="12" fill="#fff" stroke="#9fb3bd"/><rect x="2" y="2" width="12" height="9" fill="#4a93a8"/><rect x="2" y="2" width="12" height="3.500" fill="#a9d4e2"/><path d="M2 7.500C5 5.500 7 6 9 7.500S12 9 14 8V11H2Z" fill="#1f4f5c"/><path d="M2 9.500C6 8.500 10 10.500 14 9.500V11H2Z" fill="#5aa7b7"/></svg>
<span class="t " style="left:197.4px;top:774px;font-size:12px;color:#1a1a1a;line-height:16px;letter-spacing:0.018px;">picture154</span>
<span class="t " style="left:437.59999999999997px;top:774px;font-size:12px;color:#6d6d6d;line-height:16px;letter-spacing:-0.127px;">1/21/2013 1:27 AM</span>
<span class="t " style="left:557.5px;top:774px;font-size:12px;color:#6d6d6d;line-height:16px;letter-spacing:-0.3px;transform:scaleX(0.9604);transform-origin:0 50%;">JPEG image</span>
<span class="t " style="left:714.3px;top:774px;font-size:12px;color:#6d6d6d;line-height:16px;letter-spacing:-0.3px;transform:scaleX(0.9527);transform-origin:0 50%;">22 KB</span>
<svg style="left:178px;top:796.5px" width="16" height="13" viewBox="0 0 16 13"><rect x="0.500" y="0.500" width="15" height="12" fill="#fff" stroke="#9fb3bd"/><rect x="2" y="2" width="12" height="9" fill="#4a93a8"/><rect x="2" y="2" width="12" height="3.500" fill="#a9d4e2"/><path d="M2 7.500C5 5.500 7 6 9 7.500S12 9 14 8V11H2Z" fill="#1f4f5c"/><path d="M2 9.500C6 8.500 10 10.500 14 9.500V11H2Z" fill="#5aa7b7"/></svg>
<span class="t " style="left:197.4px;top:795px;font-size:12px;color:#1a1a1a;line-height:16px;letter-spacing:0.018px;">picture155</span>
<span class="t " style="left:437.59999999999997px;top:795px;font-size:12px;color:#6d6d6d;line-height:16px;letter-spacing:-0.127px;">1/21/2013 1:29 AM</span>
<span class="t " style="left:557.5px;top:795px;font-size:12px;color:#6d6d6d;line-height:16px;letter-spacing:-0.3px;transform:scaleX(0.9604);transform-origin:0 50%;">JPEG image</span>
<span class="t " style="left:714.3px;top:795px;font-size:12px;color:#6d6d6d;line-height:16px;letter-spacing:-0.3px;transform:scaleX(0.9527);transform-origin:0 50%;">94 KB</span>
<svg style="left:178px;top:817.5px" width="16" height="13" viewBox="0 0 16 13"><rect x="0.500" y="0.500" width="15" height="12" fill="#fff" stroke="#9fb3bd"/><rect x="2" y="2" width="12" height="9" fill="#4a93a8"/><rect x="2" y="2" width="12" height="3.500" fill="#a9d4e2"/><path d="M2 7.500C5 5.500 7 6 9 7.500S12 9 14 8V11H2Z" fill="#1f4f5c"/><path d="M2 9.500C6 8.500 10 10.500 14 9.500V11H2Z" fill="#5aa7b7"/></svg>
<span class="t " style="left:197.4px;top:816px;font-size:12px;color:#1a1a1a;line-height:16px;letter-spacing:0.018px;">picture156</span>
<span class="t " style="left:437.59999999999997px;top:816px;font-size:12px;color:#6d6d6d;line-height:16px;letter-spacing:-0.127px;">1/21/2013 1:30 AM</span>
<span class="t " style="left:557.5px;top:816px;font-size:12px;color:#6d6d6d;line-height:16px;letter-spacing:-0.3px;transform:scaleX(0.9604);transform-origin:0 50%;">JPEG image</span>
<span class="t " style="left:714.3px;top:816px;font-size:12px;color:#6d6d6d;line-height:16px;letter-spacing:-0.3px;transform:scaleX(0.9527);transform-origin:0 50%;">35 KB</span>
<svg style="left:178px;top:838.5px" width="16" height="13" viewBox="0 0 16 13"><rect x="0.500" y="0.500" width="15" height="12" fill="#fff" stroke="#9fb3bd"/><rect x="2" y="2" width="12" height="9" fill="#4a93a8"/><rect x="2" y="2" width="12" height="3.500" fill="#a9d4e2"/><path d="M2 7.500C5 5.500 7 6 9 7.500S12 9 14 8V11H2Z" fill="#1f4f5c"/><path d="M2 9.500C6 8.500 10 10.500 14 9.500V11H2Z" fill="#5aa7b7"/></svg>
<span class="t " style="left:197.4px;top:837px;font-size:12px;color:#1a1a1a;line-height:16px;letter-spacing:0.018px;">picture157</span>
<span class="t " style="left:437.59999999999997px;top:837px;font-size:12px;color:#6d6d6d;line-height:16px;letter-spacing:-0.127px;">1/21/2013 1:33 AM</span>
<span class="t " style="left:557.5px;top:837px;font-size:12px;color:#6d6d6d;line-height:16px;letter-spacing:-0.3px;transform:scaleX(0.9604);transform-origin:0 50%;">JPEG image</span>
<span class="t " style="left:714.3px;top:837px;font-size:12px;color:#6d6d6d;line-height:16px;letter-spacing:-0.3px;transform:scaleX(0.9527);transform-origin:0 50%;">87 KB</span>
<svg style="left:178px;top:859.5px" width="16" height="13" viewBox="0 0 16 13"><rect x="0.500" y="0.500" width="15" height="12" fill="#fff" stroke="#9fb3bd"/><rect x="2" y="2" width="12" height="9" fill="#4a93a8"/><rect x="2" y="2" width="12" height="3.500" fill="#a9d4e2"/><path d="M2 7.500C5 5.500 7 6 9 7.500S12 9 14 8V11H2Z" fill="#1f4f5c"/><path d="M2 9.500C6 8.500 10 10.500 14 9.500V11H2Z" fill="#5aa7b7"/></svg>
<span class="t " style="left:197.4px;top:858px;font-size:12px;color:#1a1a1a;line-height:16px;letter-spacing:0.018px;">picture158</span>
<span class="t " style="left:437.59999999999997px;top:858px;font-size:12px;color:#6d6d6d;line-height:16px;letter-spacing:-0.127px;">1/21/2013 1:35 AM</span>
<span class="t " style="left:557.5px;top:858px;font-size:12px;color:#6d6d6d;line-height:16px;letter-spacing:-0.3px;transform:scaleX(0.9604);transform-origin:0 50%;">JPEG image</span>
<span class="t " style="left:714.3px;top:858px;font-size:12px;color:#6d6d6d;line-height:16px;letter-spacing:-0.3px;transform:scaleX(0.9527);transform-origin:0 50%;">20 KB</span>
<svg style="left:178px;top:880.5px" width="16" height="13" viewBox="0 0 16 13"><rect x="0.500" y="0.500" width="15" height="12" fill="#fff" stroke="#9fb3bd"/><rect x="2" y="2" width="12" height="9" fill="#4a93a8"/><rect x="2" y="2" width="12" height="3.500" fill="#a9d4e2"/><path d="M2 7.500C5 5.500 7 6 9 7.500S12 9 14 8V11H2Z" fill="#1f4f5c"/><path d="M2 9.500C6 8.500 10 10.500 14 9.500V11H2Z" fill="#5aa7b7"/></svg>
<span class="t " style="left:197.4px;top:879px;font-size:12px;color:#1a1a1a;line-height:16px;letter-spacing:0.018px;">picture159</span>
<span class="t " style="left:437.59999999999997px;top:879px;font-size:12px;color:#6d6d6d;line-height:16px;letter-spacing:-0.127px;">1/21/2013 1:36 AM</span>
<span class="t " style="left:557.5px;top:879px;font-size:12px;color:#6d6d6d;line-height:16px;letter-spacing:-0.3px;transform:scaleX(0.9604);transform-origin:0 50%;">JPEG image</span>
<span class="t " style="left:714.3px;top:879px;font-size:12px;color:#6d6d6d;line-height:16px;letter-spacing:-0.3px;transform:scaleX(0.9527);transform-origin:0 50%;">89 KB</span>
<svg style="left:178px;top:901.5px" width="16" height="13" viewBox="0 0 16 13"><rect x="0.500" y="0.500" width="15" height="12" fill="#fff" stroke="#9fb3bd"/><rect x="2" y="2" width="12" height="9" fill="#4a93a8"/><rect x="2" y="2" width="12" height="3.500" fill="#a9d4e2"/><path d="M2 7.500C5 5.500 7 6 9 7.500S12 9 14 8V11H2Z" fill="#1f4f5c"/><path d="M2 9.500C6 8.500 10 10.500 14 9.500V11H2Z" fill="#5aa7b7"/></svg>
<span class="t " style="left:197.4px;top:900px;font-size:12px;color:#1a1a1a;line-height:16px;letter-spacing:0.018px;">picture160</span>
<span class="t " style="left:437.59999999999997px;top:900px;font-size:12px;color:#6d6d6d;line-height:16px;letter-spacing:-0.127px;">1/21/2013 1:36 AM</span>
<span class="t " style="left:557.5px;top:900px;font-size:12px;color:#6d6d6d;line-height:16px;letter-spacing:-0.3px;transform:scaleX(0.9604);transform-origin:0 50%;">JPEG image</span>
<span class="t " style="left:714.3px;top:900px;font-size:12px;color:#6d6d6d;line-height:16px;letter-spacing:-0.3px;transform:scaleX(0.9527);transform-origin:0 50%;">20 KB</span>
<svg style="left:178px;top:922.5px" width="16" height="13" viewBox="0 0 16 13"><rect x="0.500" y="0.500" width="15" height="12" fill="#fff" stroke="#9fb3bd"/><rect x="2" y="2" width="12" height="9" fill="#4a93a8"/><rect x="2" y="2" width="12" height="3.500" fill="#a9d4e2"/><path d="M2 7.500C5 5.500 7 6 9 7.500S12 9 14 8V11H2Z" fill="#1f4f5c"/><path d="M2 9.500C6 8.500 10 10.500 14 9.500V11H2Z" fill="#5aa7b7"/></svg>
<span class="t " style="left:197.4px;top:921px;font-size:12px;color:#1a1a1a;line-height:16px;letter-spacing:0.018px;">picture161</span>
<span class="t " style="left:437.59999999999997px;top:921px;font-size:12px;color:#6d6d6d;line-height:16px;letter-spacing:-0.127px;">1/21/2013 1:36 AM</span>
<span class="t " style="left:557.5px;top:921px;font-size:12px;color:#6d6d6d;line-height:16px;letter-spacing:-0.3px;transform:scaleX(0.9604);transform-origin:0 50%;">JPEG image</span>
<span class="t " style="left:714.3px;top:921px;font-size:12px;color:#6d6d6d;line-height:16px;letter-spacing:-0.3px;transform:scaleX(0.9527);transform-origin:0 50%;">39 KB</span>
<svg style="left:178px;top:943.5px" width="16" height="13" viewBox="0 0 16 13"><rect x="0.500" y="0.500" width="15" height="12" fill="#fff" stroke="#9fb3bd"/><rect x="2" y="2" width="12" height="9" fill="#4a93a8"/><rect x="2" y="2" width="12" height="3.500" fill="#a9d4e2"/><path d="M2 7.500C5 5.500 7 6 9 7.500S12 9 14 8V11H2Z" fill="#1f4f5c"/><path d="M2 9.500C6 8.500 10 10.500 14 9.500V11H2Z" fill="#5aa7b7"/></svg>
<span class="t " style="left:197.4px;top:942px;font-size:12px;color:#1a1a1a;line-height:16px;letter-spacing:0.018px;">picture162</span>
<span class="t " style="left:437.59999999999997px;top:942px;font-size:12px;color:#6d6d6d;line-height:16px;letter-spacing:-0.127px;">1/21/2013 1:38 AM</span>
<span class="t " style="left:557.5px;top:942px;font-size:12px;color:#6d6d6d;line-height:16px;letter-spacing:-0.3px;transform:scaleX(0.9604);transform-origin:0 50%;">JPEG image</span>
<span class="t " style="left:714.3px;top:942px;font-size:12px;color:#6d6d6d;line-height:16px;letter-spacing:-0.3px;transform:scaleX(0.9527);transform-origin:0 50%;">14 KB</span>
<div class="b" style="left:161px;top:85px;width:591px;height:23px;background:#fff;border-bottom:1px solid #e5e5e5;"></div>
<div class="b" style="left:431px;top:85px;width:1px;height:23px;background:#e5e5e5;"></div>
<div class="b" style="left:551px;top:85px;width:1px;height:23px;background:#e5e5e5;"></div>
<div class="b" style="left:671px;top:85px;width:1px;height:23px;background:#e5e5e5;"></div>
<div class="b" style="left:751px;top:85px;width:1px;height:23px;background:#e5e5e5;"></div>
<span class="t " style="left:176.9px;top:89px;font-size:12px;color:#4c607a;line-height:16px;letter-spacing:0.131px;">Name</span>
<span class="t " style="left:437.59999999999997px;top:89px;font-size:12px;color:#4c607a;line-height:16px;letter-spacing:0.122px;">Date modified</span>
<span class="t " style="left:558.3px;top:89px;font-size:12px;color:#4c607a;line-height:16px;letter-spacing:0.062px;">Type</span>
<span class="t " style="left:677.4px;top:89px;font-size:12px;color:#4c607a;line-height:16px;letter-spacing:-0.3px;transform:scaleX(0.9268);transform-origin:0 50%;">Size</span>
<svg style="left:297px;top:85px" width="8" height="5" viewBox="0 0 8 5"><path d="M0 4.500L3.700 0.500L7.400 4.500Z" fill="#555"/></svg>
<div class="b" style="left:1263px;top:84px;width:17px;height:878px;background:#fff;border-left:1px solid #b4b4b4;border-right:1px solid #9a9a9a;"></div>
<div class="b" style="left:1263px;top:84px;width:17px;height:17px;background:#fff;border:1px solid #c4c4c4;"></div>
<svg style="left:1267px;top:89.500px" width="10" height="7" viewBox="0 0 10 7"><path d="M1 5.500L5 1.500L9 5.500" fill="none" stroke="#555" stroke-width="1.500"/></svg>
<div class="b" style="left:1263px;top:732px;width:17px;height:206.5px;background:#dcdcdc;border:1px solid #a2a2a2;border-right-color:#8a8a8a;"></div>
<div class="b" style="left:1268px;top:830.5px;width:7px;height:1.3px;background:#555;"></div>
<div class="b" style="left:1268px;top:833.0px;width:7px;height:1.3px;background:#555;"></div>
<div class="b" style="left:1268px;top:835.5px;width:7px;height:1.3px;background:#555;"></div>
<div class="b" style="left:1268px;top:838.0px;width:7px;height:1.3px;background:#555;"></div>
<div class="b" style="left:1263px;top:944.5px;width:17px;height:16.5px;background:#fff;border:1px solid #c4c4c4;"></div>
<svg style="left:1267px;top:949.500px" width="10" height="7" viewBox="0 0 10 7"><path d="M1 1.500L5 5.500L9 1.500" fill="none" stroke="#555" stroke-width="1.500"/></svg>
<span class="t " style="left:13.4px;top:964.5px;font-size:12px;color:#1e395b;line-height:16px;letter-spacing:-0.103px;">165 items</span>
<span class="t " style="left:84.4px;top:964.5px;font-size:12px;color:#1e395b;line-height:16px;letter-spacing:-0.277px;">1 item selected  13.6 KB</span>
<div class="b" style="left:1232.5px;top:961.5px;width:21.5px;height:22px;background:#cde8f6;border:1px dotted #3f86b2;"></div>
<div class="b" style="left:1236.5px;top:966.5px;width:3px;height:3px;background:#fff;border:1px solid #4a4a4a;"></div>
<div class="b" style="left:1241.5px;top:967.5px;width:8.5px;height:1.2px;border-top:1.200px dashed #555;"></div>
<div class="b" style="left:1236.5px;top:970.8px;width:3px;height:3px;background:#fff;border:1px solid #4a4a4a;"></div>
<div class="b" style="left:1241.5px;top:971.8px;width:8.5px;height:1.2px;border-top:1.200px dashed #555;"></div>
<div class="b" style="left:1236.5px;top:975.1px;width:3px;height:3px;background:#fff;border:1px solid #4a4a4a;"></div>
<div class="b" style="left:1241.5px;top:976.1px;width:8.5px;height:1.2px;border-top:1.200px dashed #555;"></div>
<svg style="left:1258.5px;top:966.5px" width="14" height="11.500" viewBox="0 0 16 13"><rect x="0.500" y="0.500" width="15" height="12" fill="#fff" stroke="#9fb3bd"/><rect x="2" y="2" width="12" height="9" fill="#4a93a8"/><rect x="2" y="2" width="12" height="3.500" fill="#a9d4e2"/><path d="M2 7.500C5 5.500 7 6 9 7.500S12 9 14 8V11H2Z" fill="#1f4f5c"/><path d="M2 9.500C6 8.500 10 10.500 14 9.500V11H2Z" fill="#5aa7b7"/></svg>
<div class="b" id="ipwin" style="left:250px;top:215px;width:713px;height:548px;background:#fff;border:1px solid #4e4558;box-shadow:0 0 6px 1px rgba(60,30,90,.42);overflow:hidden;">
<span class="t " style="left:232.4px;top:7px;font-size:12px;color:#444;line-height:16px;letter-spacing:-0.044px;">(Design) Form1 - InfoPath (Trial)</span>
<svg style="left:10px;top:6px" width="16.5" height="16" viewBox="0 0 32 31"><path d="M18.300 8.800H25.300V6.800H23.300L27.200 2.800L31 6.800H29V21H21V31.500L18.300 28.500ZM20.800 11.300V18.500H26.300V11.300Z" fill="#fff" stroke="#5a3a80" stroke-width="1.600" transform="translate(0,-1.500)"/><path d="M0 3.200L18.300 0V31L0 27.800Z" fill="#6b3a8d"/><path d="M6.800 8.800H9.800V21.300H6.800Z" fill="#fff"/></svg>
<svg style="left:40px;top:7px" width="14" height="14" viewBox="0 0 14 14"><path d="M0.500 0.500H13.500V13.500H0.500Z" fill="#7b4ea3"/><rect x="2.500" y="1.500" width="9" height="5" fill="#fff"/><rect x="3" y="9" width="8" height="4.500" fill="#fff"/><rect x="6" y="10" width="2.300" height="3.500" fill="#7b4ea3"/></svg>
<svg style="left:69px;top:6.5px" width="15" height="15" viewBox="0 0 15 15"><circle cx="8.500" cy="8.500" r="5.200" fill="#bdbdbd"/><circle cx="8.500" cy="8.500" r="2.800" fill="#e9e9e9"/><path d="M8.500 6.300V10.700" stroke="#aaa" stroke-width="1.500"/><path d="M1 3L4 1L3.500 4.500" fill="none" stroke="#c5c5c5" stroke-width="1.300"/></svg>
<svg style="left:97.5px;top:7px" width="15" height="13" viewBox="0 0 15 13"><path d="M1.500 4.500H8.500C11.500 4.500 13.500 6.300 13.500 8.700S11.500 12.500 9 12.500" fill="none" stroke="#2d6aae" stroke-width="2"/><path d="M5.500 0.500L1.300 4.500L5.500 8.500" fill="none" stroke="#2d6aae" stroke-width="2"/></svg>
<svg style="left:126.5px;top:7px" width="15" height="13" viewBox="0 0 15 13"><path d="M13.500 4.500H6.500C3.500 4.500 1.500 6.300 1.500 8.700S3.500 12.500 6 12.500" fill="none" stroke="#b5b5b5" stroke-width="2"/><path d="M9.500 0.500L13.700 4.500L9.500 8.500" fill="none" stroke="#b5b5b5" stroke-width="2"/></svg>
<svg style="left:155.5px;top:6.5px" width="15" height="15" viewBox="0 0 15 15"><circle cx="5.800" cy="4.800" r="3.800" fill="#fff" stroke="#666" stroke-width="1.500"/><path d="M8.500 7.500L12.500 11" stroke="#666" stroke-width="2"/><circle cx="12" cy="3.500" r="0.900" fill="#666"/><path d="M2.500 10L5.800 13.500L9 10" fill="none" stroke="#3f9a78" stroke-width="1.900"/></svg>
<svg style="left:184px;top:12px" width="5" height="6" viewBox="0 0 5 6"><path d="M0 0.500H5" stroke="#555" stroke-width="1"/><path d="M0 2.500H5L2.500 5.500Z" fill="#555"/></svg>
<div class="b" style="left:448px;top:0px;width:99px;height:53px;background:#f3eef9;"></div>
<div class="b" style="left:448px;top:-0.5px;width:99px;height:4.5px;background:#8c55c0;"></div>
<span class="t " style="left:453.79999999999995px;top:7px;font-size:12px;color:#7a48a5;line-height:16px;letter-spacing:-0.3px;transform:scaleX(0.8890);transform-origin:0 50%;">CONTROL TOOLS</span>
<div class="b" style="left:551px;top:0px;width:42px;height:28px;background:#fffdea;"></div>
<div class="b" style="left:551px;top:28px;width:78px;height:25px;background:#fffce6;"></div>
<div class="b" style="left:551px;top:-0.5px;width:42px;height:4.5px;background:#e6c639;"></div>
<span class="t " style="left:557.1px;top:7px;font-size:12px;color:#8a7a22;line-height:16px;letter-spacing:-0.3px;transform:scaleX(0.9403);transform-origin:0 50%;">TAB...</span>
<span class="t " style="left:606.5px;top:6px;font-size:14px;color:#505050;line-height:18px;font-weight:bold;">?</span>
<div class="b" style="left:632px;top:16px;width:11px;height:2px;background:#444;"></div>
<div class="b" style="left:661.5px;top:8.5px;width:11px;height:10.5px;border:1px solid #444;border-top:3px solid #444;"></div>
<svg style="left:690.5px;top:8.5px" width="11" height="11" viewBox="0 0 11 11"><path d="M1 1L10 10M10 1L1 10" stroke="#444" stroke-width="1.900"/></svg>
<div class="b" style="left:0px;top:52px;width:712px;height:1px;background:#d4d4d4;"></div>
<div class="b" style="left:0px;top:28.5px;width:59px;height:24px;background:#6b3a8d;"></div>
<span class="t " style="left:19.00000000000002px;top:32.5px;font-size:12px;color:#fff;line-height:16px;letter-spacing:-0.3px;transform:scaleX(0.8715);transform-origin:0 50%;">FILE</span>
<div class="b" style="left:63px;top:28.5px;width:61.5px;height:24.5px;background:#fff;border:1px solid #d4d4d4;border-bottom:none;"></div>
<span class="t " style="left:76.1px;top:32.5px;font-size:12px;color:#4b3a72;line-height:16px;letter-spacing:-0.233px;">HOME</span>
<span class="t " style="left:139.79999999999998px;top:32.5px;font-size:12px;color:#444;line-height:16px;letter-spacing:-0.3px;transform:scaleX(0.8939);transform-origin:0 50%;">INSERT</span>
<span class="t " style="left:206.6px;top:32.5px;font-size:12px;color:#444;line-height:16px;letter-spacing:-0.3px;transform:scaleX(0.9201);transform-origin:0 50%;">PAGE DESIGN</span>
<span class="t " style="left:307.6px;top:32.5px;font-size:12px;color:#444;line-height:16px;letter-spacing:0.526px;">DATA</span>
<span class="t " style="left:367.69999999999993px;top:32.5px;font-size:12px;color:#444;line-height:16px;letter-spacing:-0.3px;transform:scaleX(0.8836);transform-origin:0 50%;">DEVELOPER</span>
<span class="t " style="left:463.6px;top:32.5px;font-size:12px;color:#444;line-height:16px;letter-spacing:-0.3px;transform:scaleX(0.8867);transform-origin:0 50%;">PROPERTIES</span>
<span class="t " style="left:566.6px;top:32.5px;font-size:12px;color:#444;line-height:16px;letter-spacing:-0.384px;">LAYOUT</span>
<svg style="left:664.5px;top:38.30000000000001px" width="6" height="4" viewBox="0 0 7 5"><path d="M0 0H7L3.500 4.500Z" fill="#666"/></svg>
<div class="b" style="left:677px;top:28px;width:24px;height:24.5px;background:#ababab;"></div>
<svg style="left:677px;top:28px" width="24" height="24" viewBox="0 0 24 24"><circle cx="11.800" cy="8.300" r="5.300" fill="#fff"/><path d="M3 24.500C3 16 8 14 12 14S21 16 21 24.500Z" fill="#fff"/></svg>
<div class="b" style="left:72px;top:57px;width:1px;height:83px;background:#e3e3e3;"></div>
<div class="b" style="left:267px;top:57px;width:1px;height:83px;background:#e3e3e3;"></div>
<div class="b" style="left:330px;top:57px;width:1px;height:83px;background:#e3e3e3;"></div>
<div class="b" style="left:397px;top:57px;width:1px;height:83px;background:#e3e3e3;"></div>
<div class="b" style="left:495px;top:57px;width:1px;height:83px;background:#e3e3e3;"></div>
<div class="b" style="left:540px;top:57px;width:1px;height:83px;background:#e3e3e3;"></div>
<div class="b" style="left:595px;top:57px;width:1px;height:83px;background:#e3e3e3;"></div>
<div class="b" style="left:0px;top:145px;width:712px;height:1px;background:#d0d0d0;"></div>
<span class="t " style="left:9.799999999999978px;top:128.8px;font-size:12px;color:#666;line-height:16px;letter-spacing:0.043px;">Clipboard</span>
<span class="t " style="left:139.79999999999998px;top:128.8px;font-size:12px;color:#666;line-height:16px;letter-spacing:-0.402px;">Format Text</span>
<span class="t " style="left:270.4px;top:128.8px;font-size:12px;color:#666;line-height:16px;letter-spacing:-0.382px;">Font Styles</span>
<span class="t " style="left:333.4px;top:128.8px;font-size:12px;color:#666;line-height:16px;letter-spacing:0.046px;">Controls</span>
<svg style="left:386px;top:134px" width="7" height="7" viewBox="0 0 7 7"><path d="M0.500 4V0.500H4" fill="none" stroke="#777"/><path d="M3 3L6.500 6.500M6.500 3.500V6.500H3.500" fill="none" stroke="#777"/></svg>
<span class="t " style="left:433.0px;top:128.8px;font-size:12px;color:#666;line-height:16px;letter-spacing:-0.145px;">Rules</span>
<span class="t " style="left:555.1999999999999px;top:128.8px;font-size:12px;color:#666;line-height:16px;letter-spacing:-0.3px;transform:scaleX(0.9522);transform-origin:0 50%;">Form</span>
<svg style="left:690.5px;top:132px" width="11" height="10" viewBox="0 0 11 10"><path d="M0 5H5M5 1.500V8.500M5 3H9V7H5M9 1V9" fill="none" stroke="#555" stroke-width="1.300"/></svg>
<svg style="left:12px;top:60px" width="30" height="32" viewBox="0 0 30 32"><rect x="0.800" y="4" width="23.800" height="24.400" fill="#f0c273"/><path d="M6 8V4.800H9.500C9.500 2.500 10.800 1 13 1S16.500 2.500 16.500 4.800H20V8Z" fill="#6a6a6a"/><circle cx="13" cy="4" r="1.500" fill="#fff"/><path d="M15.800 12.300H24.500L28.300 16.200V30.200H15.800Z" fill="#fff" stroke="#5a5a5a" stroke-width="1"/><path d="M24.300 12.500V16.400H28.200" fill="none" stroke="#5a5a5a" stroke-width="1"/></svg>
<span class="t " style="left:10.700000000000012px;top:94px;font-size:12px;color:#444;line-height:16px;letter-spacing:-0.321px;">Paste</span>
<svg style="left:22.19999999999999px;top:116px" width="5" height="3" viewBox="0 0 5 3"><path d="M0 0H5L2.5 3Z" fill="#666"/></svg>
<svg style="left:49px;top:59px" width="16" height="16" viewBox="0 0 16 16"><path d="M4 0.500L9.800 10.500M12 0.500L6.200 10.500" stroke="#5f6468" stroke-width="1.700" fill="none"/><circle cx="3.700" cy="12.300" r="2.500" fill="#fff" stroke="#5f7f95" stroke-width="1.300"/><circle cx="12.300" cy="12.300" r="2.500" fill="#fff" stroke="#5f7f95" stroke-width="1.300"/></svg>
<svg style="left:49px;top:83px" width="16" height="15" viewBox="0 0 16 15"><path d="M0.500 0.500H5L7 2.500V10.500H0.500Z" fill="#fff" stroke="#5a5a5a"/><path d="M2 3.500H4.500M2 6H4.500M2 8.500H4.500" stroke="#6a6a6a" stroke-width="0.800"/><path d="M6.500 3.500H12L15 6.500V14H6.500Z" fill="#fff" stroke="#5a5a5a"/><path d="M8.500 8.500H13M8.500 11.500H13" stroke="#6a6a6a" stroke-width="0.800"/></svg>
<svg style="left:49px;top:105px" width="17" height="15" viewBox="0 0 17 15"><path d="M0.500 7.500L6 3.500L10 10L4.500 14.500Z" fill="#eed88a"/><path d="M2 8.500L7.500 13M1 7.800L5 13.800" stroke="#d8bf62" stroke-width="0.800"/><path d="M6 3.500L9.500 1L13.500 7.500L10 10Z" fill="#55595c"/><path d="M12 3L15.500 0.500" stroke="#55595c" stroke-width="2.400"/></svg>
<div class="b" style="left:77px;top:56px;width:113.5px;height:22.5px;background:#fff;border:1px solid #ababab;"></div>
<div class="b" style="left:189.5px;top:56px;width:40px;height:22.5px;background:#fff;border:1px solid #ababab;"></div>
<span class="t " style="left:79.79999999999998px;top:59.5px;font-size:12.5px;color:#222;line-height:16px;letter-spacing:-0.154px;">Calibri</span>
<span class="t " style="left:193.4px;top:59.5px;font-size:12.5px;color:#222;line-height:16px;letter-spacing:-0.3px;transform:scaleX(0.8969);transform-origin:0 50%;">14</span>
<svg style="left:180.3px;top:66px" width="5" height="3" viewBox="0 0 5 3"><path d="M0 0H5L2.5 3Z" fill="#555"/></svg>
<svg style="left:220.2px;top:66px" width="5" height="3" viewBox="0 0 5 3"><path d="M0 0H5L2.5 3Z" fill="#555"/></svg>
<svg style="left:233.5px;top:59px" width="15" height="16" viewBox="0 0 15 16"><path d="M2.800 1V15M0.500 3.500L2.800 0.800L5.100 3.500M0.500 12.500L2.800 15.200L5.100 12.500" fill="none" stroke="#4f7d96" stroke-width="1.100"/><path d="M6.500 3H14.500M6.500 6.300H14.500M6.500 9.600H14.500M6.500 12.900H14.500" stroke="#5a5a5a" stroke-width="1.100"/></svg>
<svg style="left:253px;top:66px" width="5" height="3" viewBox="0 0 5 3"><path d="M0 0H5L2.5 3Z" fill="#666"/></svg>
<div class="b" style="left:77px;top:78.69999999999999px;width:21.8px;height:23px;background:#cdbee0;"></div>
<span class="t " style="left:83.00000000000003px;top:81.5px;font-size:12.5px;color:#444;line-height:16px;letter-spacing:-0.3px;font-weight:bold;transform:scaleX(0.9740);transform-origin:0 50%;">B</span>
<span class="t " style="left:106.30000000000001px;top:81.5px;font-size:13.5px;color:#444;line-height:16px;font-style:italic;font-family:'Liberation Serif',serif;font-weight:bold;">I</span>
<span class="t " style="left:127.1px;top:81.3px;font-size:12px;color:#444;line-height:16px;letter-spacing:0.034px;">U</span>
<div class="b" style="left:127.30000000000001px;top:94.60000000000002px;width:8.5px;height:1.2px;background:#444;"></div>
<svg style="left:146.2px;top:89px" width="5" height="3" viewBox="0 0 5 3"><path d="M0 0H5L2.5 3Z" fill="#666"/></svg>
<div class="b" style="left:159.5px;top:80px;width:1px;height:20px;background:#e0e0e0;"></div>
<span class="t " style="left:166.3px;top:81px;font-size:10.5px;color:#555;line-height:12px;letter-spacing:-0.6px;font-weight:bold;">ab</span>
<svg style="left:173px;top:82px" width="10" height="12" viewBox="0 0 10 12"><path d="M9 0.500L3.500 9" stroke="#6a6a6a" stroke-width="2.400"/><path d="M3.800 8L1.500 11.500L5 9.500Z" fill="#444"/></svg>
<div class="b" style="left:166px;top:93.80000000000001px;width:17.7px;height:4.1px;background:#e6e60f;border-radius:2px;"></div>
<svg style="left:189.3px;top:89px" width="5" height="3" viewBox="0 0 5 3"><path d="M0 0H5L2.5 3Z" fill="#666"/></svg>
<span class="t " style="left:203.6px;top:81px;font-size:14px;color:#4a4a4a;line-height:14px;letter-spacing:2.462px;">A</span>
<div class="b" style="left:201px;top:94.10000000000002px;width:15.7px;height:3.8px;background:#5783a3;"></div>
<svg style="left:223.2px;top:89px" width="5" height="3" viewBox="0 0 5 3"><path d="M0 0H5L2.5 3Z" fill="#666"/></svg>
<div class="b" style="left:236.2px;top:80px;width:1px;height:20px;background:#ececec;"></div>
<span class="t " style="left:245.3px;top:81.5px;font-size:11px;color:#666;line-height:12px;">A</span>
<svg style="left:247px;top:85px" width="14" height="13" viewBox="0 0 14 13"><path d="M8.500 0.500L13.500 4.500L5.500 12.500L0.500 8.500Z" fill="#e2879a"/><path d="M3 6L8 10" stroke="#fff" stroke-width="1"/></svg>
<div class="b" style="left:99.19999999999999px;top:102.30000000000001px;width:21.7px;height:22.4px;background:#cdbee0;"></div>
<svg style="left:81px;top:107.69999999999999px" width="15" height="11" viewBox="0 0 15 11"><path d="M0 0.6H14" stroke="#555" stroke-width="1.100"/><path d="M0 3.7H9.5" stroke="#555" stroke-width="1.100"/><path d="M0 6.8H14" stroke="#555" stroke-width="1.100"/><path d="M0 9.9H9.5" stroke="#555" stroke-width="1.100"/></svg>
<svg style="left:103px;top:107.69999999999999px" width="15" height="11" viewBox="0 0 15 11"><path d="M0 0.6H14" stroke="#555" stroke-width="1.100"/><path d="M2.2 3.7H11.8" stroke="#555" stroke-width="1.100"/><path d="M0 6.8H14" stroke="#555" stroke-width="1.100"/><path d="M2.2 9.9H11.8" stroke="#555" stroke-width="1.100"/></svg>
<svg style="left:125px;top:107.69999999999999px" width="15" height="11" viewBox="0 0 15 11"><path d="M0 0.6H14" stroke="#555" stroke-width="1.100"/><path d="M4.5 3.7H14" stroke="#555" stroke-width="1.100"/><path d="M0 6.8H14" stroke="#555" stroke-width="1.100"/><path d="M4.5 9.9H14" stroke="#555" stroke-width="1.100"/></svg>
<div class="b" style="left:147.39999999999998px;top:103px;width:1px;height:21px;background:#e0e0e0;"></div>
<svg style="left:154.5px;top:107.5px" width="17" height="11" viewBox="0 0 17 11"><path d="M3.500 0.600H16.500M8 3.700H16.500M8 6.800H16.500M3.500 9.900H16.500" stroke="#555" stroke-width="1.100"/><path d="M7 5.200H1M3.500 2.700L0.800 5.200L3.500 7.700" fill="none" stroke="#3f7390" stroke-width="1.400"/></svg>
<svg style="left:176.5px;top:107.5px" width="17" height="11" viewBox="0 0 17 11"><path d="M3.500 0.600H16.500M8 3.700H16.500M8 6.800H16.500M3.500 9.900H16.500" stroke="#555" stroke-width="1.100"/><path d="M0.500 5.200H6.500M4 2.700L6.700 5.200L4 7.700" fill="none" stroke="#3f7390" stroke-width="1.400"/></svg>
<div class="b" style="left:200.39999999999998px;top:103px;width:1px;height:21px;background:#e0e0e0;"></div>
<svg style="left:208.5px;top:104.5px" width="14" height="16" viewBox="0 0 14 16"><circle cx="1.500" cy="2" r="1.300" fill="#4f7d96"/><circle cx="1.500" cy="8" r="1.300" fill="#4f7d96"/><circle cx="1.500" cy="14" r="1.300" fill="#4f7d96"/><path d="M5 2H13.500M5 8H13.500M5 14H13.500" stroke="#555" stroke-width="1.100"/></svg>
<svg style="left:229.8px;top:112px" width="5.5" height="3.2" viewBox="0 0 5.5 3.2"><path d="M0 0H5.5L2.75 3.2Z" fill="#666"/></svg>
<svg style="left:284px;top:60px" width="32" height="32" viewBox="0 0 32 32"><path d="M3 21.500L10.200 2.500H11.200L18.200 21.500M6 15H15.200" fill="none" stroke="#3f76b4" stroke-width="3.300" stroke-linejoin="miter"/><path d="M29.300 6L30.300 11.500L20.500 21L17.500 18.500Z" fill="#7a7a7a"/><path d="M16.500 19.500L19.500 22C18.500 27.500 12 30 7 30C11.500 27.500 11.500 21.500 16.500 19.500Z" fill="#3f76b4"/><path d="M13 24C14 22.500 15.500 21.500 17 22" stroke="#cfe0f0" stroke-width="1.200" fill="none"/></svg>
<span class="t " style="left:282.79999999999995px;top:94px;font-size:12px;color:#444;line-height:16px;letter-spacing:0.282px;">Quick</span>
<span class="t " style="left:279.0px;top:110px;font-size:12px;color:#444;line-height:16px;letter-spacing:-0.415px;">Styles</span>
<svg style="left:312.29999999999995px;top:117px" width="4.7" height="2.8" viewBox="0 0 4.7 2.8"><path d="M0 0H4.7L2.35 2.8Z" fill="#666"/></svg>
<svg style="left:349px;top:61px" width="32" height="31" viewBox="0 0 32 31"><path d="M9.500 6.500V3.200C9.500 2 10.300 1.200 11.500 1.200H18.500C19.700 1.200 20.500 2 20.500 3.200V6.500H18.300V3.500H11.700V6.500Z" fill="#777"/><rect x="1" y="6.200" width="28" height="19.700" rx="1.500" fill="#777"/><rect x="1" y="14.500" width="28" height="1.500" fill="#fff"/><rect x="12.500" y="13" width="5" height="4" fill="#fff"/><path d="M19 14.500L21.500 12L24 14.500V18H19Z" fill="#fff" opacity="0"/><path d="M20.800 13.800V18M20 19H21.800V27.500H20Z" fill="#2f7fb8" stroke="#2f7fb8" stroke-width="2.200"/><path d="M19.200 13.200L20.900 11.600L22.600 13.200" fill="none" stroke="#fff" stroke-width="0.001"/><path d="M27.500 19V29.500" stroke="#2f7fb8" stroke-width="2"/><path d="M24.800 12.500V16C24.800 17.500 26 18.700 27.500 18.700S30.200 17.500 30.200 16V12.500" fill="none" stroke="#2f7fb8" stroke-width="1.900"/></svg>
<span class="t " style="left:340.79999999999995px;top:94px;font-size:12px;color:#444;line-height:16px;letter-spacing:0.188px;">Controls</span>
<svg style="left:360.79999999999995px;top:116px" width="5.2" height="3" viewBox="0 0 5.2 3"><path d="M0 0H5.2L2.6 3Z" fill="#666"/></svg>
<svg style="left:408px;top:60.5px" width="31" height="29" viewBox="0 0 31 29"><rect x="1.200" y="1.200" width="26" height="25.600" fill="#fff" stroke="#6a6a6a" stroke-width="1.300"/><path d="M4 5H23" stroke="#bdbdbd" stroke-width="1"/><rect x="4.300" y="7.800" width="19.500" height="6" fill="#e2b48c" stroke="#b98d6a" stroke-width="1"/><path d="M4 17H20" stroke="#c8c8c8" stroke-width="1"/><rect x="4.300" y="19.500" width="19.500" height="4.500" fill="#fff" stroke="#8a8a8a" stroke-width="1"/><path d="M25.500 10.500H30.500L27.300 17H30L22.500 28.300L24.800 19.800H21.800Z" fill="#f5c56f" stroke="#fff" stroke-width="0.700"/></svg>
<span class="t " style="left:411.6px;top:94px;font-size:12px;color:#444;line-height:16px;letter-spacing:0.625px;">Add</span>
<span class="t " style="left:406.29999999999995px;top:110px;font-size:12px;color:#444;line-height:16px;letter-spacing:-0.193px;">Rule</span>
<svg style="left:434.20000000000005px;top:117px" width="4.7" height="2.8" viewBox="0 0 4.7 2.8"><path d="M0 0H4.7L2.35 2.8Z" fill="#666"/></svg>
<div class="b" style="left:449px;top:58.5px;width:40.5px;height:66px;background:#e3d8f1;"></div>
<svg style="left:453.5px;top:61px" width="29" height="28" viewBox="0 0 29 28"><rect x="8.500" y="1" width="17.500" height="16" fill="#f6f2fb" stroke="#7c7c7c" stroke-width="0.800"/><rect x="6" y="3" width="17.500" height="16" fill="#f6f2fb" stroke="#7c7c7c" stroke-width="0.800"/><rect x="3.300" y="5.200" width="17.700" height="16" fill="#fcfbfe" stroke="#6a6a6a" stroke-width="1"/><path d="M5.500 8H18" stroke="#bbb" stroke-width="0.900"/><rect x="5.800" y="10.300" width="12.500" height="5" fill="#e2b48c" stroke="#b98d6a" stroke-width="1"/><path d="M21.500 20L27.500 13.500V21L21.500 27Z" fill="#8c8c8c"/><rect x="0.800" y="19.800" width="20.800" height="7.200" fill="#fff" stroke="#6a6a6a" stroke-width="1.300"/></svg>
<span class="t " style="left:447.9px;top:94px;font-size:12px;color:#444;line-height:16px;letter-spacing:-0.432px;">Manage</span>
<span class="t " style="left:453.79999999999995px;top:110px;font-size:12px;color:#444;line-height:16px;letter-spacing:-0.42px;">Rules</span>
<div class="b" style="left:503px;top:57px;width:30.5px;height:30.5px;background:#fff;border:1px solid #c9c9c9;"></div>
<svg style="left:510.5px;top:64.5px" width="16" height="14" viewBox="0 0 16 14"><path d="M2.500 4.500L3.500 1H6.200L7 4.500V13H0.800V7.500Z" fill="#5a5a5a"/><path d="M13.500 4.500L12.500 1H9.800L9 4.500V13H15.200V7.500Z" fill="#5a5a5a"/><rect x="6.500" y="5" width="3" height="3.500" fill="#5a5a5a"/><rect x="2" y="9" width="3.800" height="3" fill="#fff" opacity=".75"/><rect x="10.200" y="9" width="3.800" height="3" fill="#fff" opacity=".75"/><path d="M3.200 2H6M10 2H12.800" stroke="#fff" stroke-width="0.700"/></svg>
<span class="t " style="left:499.79999999999995px;top:92px;font-size:12px;color:#444;line-height:16px;letter-spacing:0.118px;">Editing</span>
<svg style="left:516.2px;top:114px" width="5" height="3" viewBox="0 0 5 3"><path d="M0 0H5L2.5 3Z" fill="#666"/></svg>
<svg style="left:552px;top:59px" width="34" height="33" viewBox="0 0 34 33"><path d="M5.500 2.500H19.500L25.800 9V29.500H5.500Z" fill="#fff" stroke="#777" stroke-width="1.100"/><path d="M19.500 2.500V9H25.800" fill="none" stroke="#777" stroke-width="1.100"/><path d="M8.500 13H14M8.500 17.500H13M8.500 22H13M8.500 12V23" stroke="#9a9a9a" stroke-width="1" fill="none"/><circle cx="20.800" cy="20.300" r="6.300" fill="#fff" stroke="#666" stroke-width="1.700"/><path d="M25.300 25L31.500 31" stroke="#777" stroke-width="2.600"/><path d="M1 8L5.500 12.500L15.500 1.500" fill="none" stroke="#5fa090" stroke-width="2.400"/></svg>
<span class="t " style="left:547.0px;top:94px;font-size:12px;color:#444;line-height:16px;letter-spacing:-0.23px;">Preview</span>
<div class="b" style="left:444.29999999999995px;top:54.19999999999999px;width:49.5px;height:84px;border:4.600px solid #d81e2c;"></div>
<div class="b" style="left:0px;top:146px;width:495px;height:360px;background:#fff;"></div>
<div class="b" style="left:12.5px;top:146px;width:480px;height:194px;background:#fff;border-left:1px solid #c4c4c4;border-bottom:1px solid #c4c4c4;"></div>
<div class="b" style="left:13px;top:155px;width:466px;height:1px;border-top:1px dashed #9a9a9a;"></div>
<div class="b" style="left:121px;top:148px;width:357px;height:1px;background:#dcdcdc;"></div>
<div class="b" style="left:13px;top:147px;width:1px;height:4px;background:#aaa;"></div>
<div class="b" style="left:114px;top:147px;width:1px;height:5px;background:#aaa;"></div>
<div class="b" style="left:339px;top:147px;width:1px;height:5px;background:#aaa;"></div>
<div class="b" style="left:13px;top:171px;width:466px;height:32px;background:#dfe7e6;border-top:1px dashed #b5bcbb;border-bottom:1px dashed #9a9a9a;"></div>
<span class="t " style="left:36.20000000000001px;top:175.5px;font-size:17px;color:#5a8ba6;line-height:24px;letter-spacing:0.413px;font-weight:bold;"><span class="sq">Yêu</span> <span class="sq">Cầu</span> <span class="sq">Nhà</span> <span class="sq">Máy</span> <span class="sq">Sản</span> <span class="sq">Xuất</span> <span class="sq">Các</span> <span class="sq">Sản</span> <span class="sq">Phẩm</span> <span class="sq">Sau:</span></span>
<div class="b" style="left:13px;top:155px;width:1px;height:149px;border-left:1px dashed #9a9a9a;"></div>
<div class="b" style="left:37px;top:203px;width:1px;height:50px;border-left:1px dashed #a5a5a5;"></div>
<div class="b" style="left:37px;top:207px;width:442px;height:46px;background:#fff;border:1px solid #d0d0d0;border-right:none;"></div>
<div class="b" style="left:38px;top:208px;width:441px;height:19px;background:#eeeeee;"></div>
<div class="b" style="left:339px;top:207px;width:1px;height:46px;border-left:1px dashed #aaa;"></div>
<div class="b" style="left:44px;top:229px;width:291px;height:21px;background:#fff;border:1px solid #555;"></div>
<svg style="left:319px;top:235px" width="12" height="8" viewBox="0 0 12 8"><path d="M1 1L6 6L11 1" fill="none" stroke="#111" stroke-width="2"/></svg>
<div class="b" style="left:345px;top:230px;width:134px;height:19px;background:#fff;border:1px solid #d6d6d6;border-right:none;"></div>
<div class="b" style="left:37px;top:252px;width:105px;height:17px;background:#fff;border:1px solid #c9c9c9;"></div>
<div class="b" style="left:40px;top:255px;width:11px;height:11px;background:#3b6fc4;border:1px solid #8fb0e8;"></div>
<svg style="left:42px;top:259px" width="7" height="4" viewBox="0 0 7 4"><path d="M0 0H7L3.500 4Z" fill="#fff"/></svg>
<span class="t " style="left:54px;top:253px;font-size:11px;color:#b0b0b0;line-height:16px;letter-spacing:-0.1px;">Repeating Table</span>
<div class="b" style="left:13px;top:272px;width:152px;height:32px;border:1px dashed #a8a8a8;border-left:none;"></div>
<div class="b" style="left:165px;top:272px;width:314px;height:32px;border-top:1px dashed #a8a8a8;border-bottom:1px dashed #a8a8a8;"></div>
<span class="t " style="left:36.20000000000001px;top:278.5px;font-size:17px;color:#222;line-height:22px;letter-spacing:-0.3px;font-style:italic;transform:scaleX(0.9641);transform-origin:0 50%;"><span class="sq">Ngày</span> <span class="sq">Giao</span> <span class="sq">Hàng</span></span>
<div class="b" style="left:171px;top:279px;width:308px;height:18px;background:#fff;border:1px solid #d9d9d9;border-right:none;"></div>
<div class="b" style="left:188px;top:306px;width:150px;height:31px;background:linear-gradient(#f4f4f4,#e9e9e9 55%,#d3d3d3);border:1px solid #8e8e8e;"></div>
<span class="t " style="left:216.00000000000003px;top:312.8px;font-size:16px;color:#1a1a1a;line-height:20px;letter-spacing:-0.424px;font-weight:bold;">Gửi Yêu Cầu</span>
<div class="b" style="left:340px;top:306px;width:140px;height:31px;background:linear-gradient(#f4f4f4,#e9e9e9 55%,#d3d3d3);border:1px solid #8e8e8e;border-right:none;"></div>
<span class="t " style="left:392.4px;top:312.8px;font-size:16px;color:#1a1a1a;line-height:20px;letter-spacing:0.089px;font-weight:bold;">Thoát</span>
<div class="b" style="left:180px;top:301px;width:5px;height:5px;background:#c9c9c9;"></div>
<div class="b" style="left:259px;top:301px;width:5px;height:5px;background:#c9c9c9;"></div>
<div class="b" style="left:339px;top:301px;width:5px;height:5px;background:#c9c9c9;"></div>
<div class="b" style="left:180px;top:320px;width:5px;height:5px;background:#c9c9c9;"></div>
<div class="b" style="left:339px;top:320px;width:5px;height:5px;background:#c9c9c9;"></div>
<div class="b" style="left:180px;top:339px;width:5px;height:5px;background:#c9c9c9;"></div>
<div class="b" style="left:259px;top:339px;width:5px;height:5px;background:#c9c9c9;"></div>
<div class="b" style="left:339px;top:339px;width:5px;height:5px;background:#c9c9c9;"></div>
<div class="b" style="left:177px;top:301px;width:155.5px;height:40px;border:4.500px solid #d91f2a;"></div>
<span class="t " style="left:350px;top:283px;font-size:20.5px;color:rgba(120,120,120,.55);line-height:24px;transform:rotate(-45deg);transform-origin:50% 50%;">CTL.VN</span>
<div class="b" style="left:478.5px;top:146px;width:17px;height:361px;background:#f8f8f8;"></div>
<svg style="left:480.5px;top:481px" width="12" height="9" viewBox="0 0 12 9"><path d="M1 1.200L6 6.800L11 1.200" fill="none" stroke="#b3b3b3" stroke-width="2.200"/></svg>
<div class="b" style="left:0px;top:507px;width:495px;height:17px;background:#f0f0f0;"></div>
<div class="b" style="left:40px;top:507px;width:280px;height:17px;background:#cdcdcd;"></div>
<svg style="left:17px;top:509.5px" width="10" height="12" viewBox="0 0 10 12"><path d="M8.500 1L2.500 6L8.500 11" fill="none" stroke="#4a4a4a" stroke-width="2.500"/></svg>
<svg style="left:451.5px;top:509.5px" width="10" height="12" viewBox="0 0 10 12"><path d="M1.500 1L7.500 6L1.500 11" fill="none" stroke="#4a4a4a" stroke-width="2.500"/></svg>
<div class="b" style="left:0px;top:524px;width:712px;height:23px;background:#6b3a8d;"></div>
<div class="b" style="left:495px;top:146px;width:1px;height:375px;background:#c4c4c4;"></div>
<div class="b" style="left:509px;top:152px;width:188px;height:21px;background:#fff;border:1px solid #ababab;"></div>
<div class="b" style="left:678px;top:154px;width:17px;height:17px;background:#fff;border:1px solid #777;"></div>
<svg style="left:682px;top:160px" width="9" height="6" viewBox="0 0 9 6"><path d="M1 1L4.500 4.500L8 1" fill="none" stroke="#333" stroke-width="1.600"/></svg>
<div class="b" style="left:509px;top:179px;width:188px;height:243px;background:#fff;border:1px solid #828282;"></div>
<div class="b" style="left:554px;top:247px;width:9px;height:9px;background:linear-gradient(#fff,#e4e4e4);border:1px solid #8a8a8a;border-radius:1px;"></div>
<div class="b" style="left:556px;top:251px;width:5px;height:1px;background:#333;"></div>
<svg style="left:566px;top:245px" width="17" height="14" viewBox="0 0 17 14"><path d="M1 3V12.500H12V3H7L5.500 1H1Z" fill="#e9c45e" stroke="#b48d2b" stroke-width="0.800"/><path d="M3 13L5.500 6H16.500L13 13Z" fill="#f6dd8c" stroke="#b48d2b" stroke-width="0.800"/><rect x="6" y="9" width="6" height="5" fill="#3c6fc2"/></svg>
<span class="t " style="left:588.3px;top:244.2px;font-size:10.5px;color:#222;line-height:16px;letter-spacing:0.165px;font-family:'DejaVu Sans','Liberation Sans',sans-serif;">group2</span>
<svg style="left:587px;top:262px" width="14" height="12" viewBox="0 0 14 12"><path d="M1.500 11.500H13.500V1.500" fill="none" stroke="#55606e" stroke-width="1.400"/><path d="M3.500 0.500H12.500V10.500H0.500V3.500Z" fill="#fdfdfe" stroke="#8994a3"/><path d="M0.500 3.500H3.500V0.500" fill="none" stroke="#8994a3" stroke-width="0.800"/><path d="M4.500 2.500H11M2.500 4.500H11M2.500 6.500H11M2.500 8.500H11" stroke="#9fadc0" stroke-width="1"/></svg>
<span class="t " style="left:606.6999999999999px;top:260.2px;font-size:10.5px;color:#222;line-height:16px;letter-spacing:-0.367px;font-family:'DejaVu Sans','Liberation Sans',sans-serif;">SanPham</span>
<svg style="left:587px;top:278px" width="14" height="12" viewBox="0 0 14 12"><path d="M1.500 11.500H13.500V1.500" fill="none" stroke="#55606e" stroke-width="1.400"/><path d="M3.500 0.500H12.500V10.500H0.500V3.500Z" fill="#fdfdfe" stroke="#8994a3"/><path d="M0.500 3.500H3.500V0.500" fill="none" stroke="#8994a3" stroke-width="0.800"/><path d="M4.500 2.500H11M2.500 4.500H11M2.500 6.500H11M2.500 8.500H11" stroke="#9fadc0" stroke-width="1"/></svg>
<span class="t " style="left:606.6999999999999px;top:276.2px;font-size:10.5px;color:#222;line-height:16px;letter-spacing:0.107px;font-family:'DejaVu Sans','Liberation Sans',sans-serif;">SoLuong</span>
<span class="t " style="left:654.5px;top:277px;font-size:10px;color:#d0505e;line-height:16px;font-family:'DejaVu Sans','Liberation Sans',sans-serif;">*</span>
<svg style="left:549px;top:294px" width="14" height="12" viewBox="0 0 14 12"><path d="M1.500 11.500H13.500V1.500" fill="none" stroke="#55606e" stroke-width="1.400"/><path d="M3.500 0.500H12.500V10.500H0.500V3.500Z" fill="#fdfdfe" stroke="#8994a3"/><path d="M0.500 3.500H3.500V0.500" fill="none" stroke="#8994a3" stroke-width="0.800"/><path d="M4.500 2.500H11M2.500 4.500H11M2.500 6.500H11M2.500 8.500H11" stroke="#9fadc0" stroke-width="1"/></svg>
<span class="t " style="left:568.6999999999999px;top:292.2px;font-size:10.5px;color:#222;line-height:16px;letter-spacing:-0.126px;font-family:'DejaVu Sans','Liberation Sans',sans-serif;">NgayGiao</span>
<span class="t " style="left:620.8px;top:293px;font-size:10px;color:#d0505e;line-height:16px;font-family:'DejaVu Sans','Liberation Sans',sans-serif;">*</span>
<svg style="left:549px;top:310px" width="14" height="12" viewBox="0 0 14 12"><path d="M1.500 11.500H13.500V1.500" fill="none" stroke="#55606e" stroke-width="1.400"/><path d="M3.500 0.500H12.500V10.500H0.500V3.500Z" fill="#fdfdfe" stroke="#8994a3"/><path d="M0.500 3.500H3.500V0.500" fill="none" stroke="#8994a3" stroke-width="0.800"/><path d="M4.500 2.500H11M2.500 4.500H11M2.500 6.500H11M2.500 8.500H11" stroke="#9fadc0" stroke-width="1"/></svg>
<span class="t " style="left:568.6999999999999px;top:308.2px;font-size:10.5px;color:#222;line-height:16px;letter-spacing:-0.107px;font-family:'DejaVu Sans','Liberation Sans',sans-serif;">TrangThai</span>
<div class="b" style="left:509px;top:431.29999999999995px;width:12.7px;height:12.3px;background:#fff;border:1px solid #707070;"></div>
<span class="t " style="left:524.9px;top:430.2px;font-size:11.5px;color:#222;line-height:16px;letter-spacing:0.091px;">Show details</span>
<span class="t " style="left:509.1px;top:448.2px;font-size:11.5px;color:#3c3c3c;line-height:16px;letter-spacing:-0.445px;font-weight:bold;">Actions</span>
<div class="b" style="left:509px;top:462px;width:188px;height:1px;background:#c6c6c6;"></div>
<span class="t " style="left:518.9px;top:468.9px;font-size:11.5px;color:#b3b3b3;line-height:16px;letter-spacing:0.102px;">Add Field</span>
<span class="t " style="left:518.9px;top:487.2px;font-size:11.5px;color:#2b6a9b;line-height:16px;letter-spacing:0.006px;">Manage Data Connections...</span>
<div class="b" style="left:444px;top:146px;width:215px;height:99px;background:#fff;border:1px solid #c8c8c8;box-shadow:1px 1px 3px rgba(0,0,0,.18);"></div>
<span class="t " style="left:455.9px;top:153px;font-size:12px;color:#4a4a4a;line-height:16px;letter-spacing:-0.226px;font-weight:bold;">Manage Rules</span>
<span class="t " style="left:455.9px;top:174px;font-size:12px;color:#595959;line-height:16px;letter-spacing:-0.198px;">Show the Rules task pane to</span>
<span class="t " style="left:455.9px;top:189px;font-size:12px;color:#595959;line-height:16px;letter-spacing:-0.037px;">manage existing rules for this</span>
<span class="t " style="left:455.9px;top:204px;font-size:12px;color:#595959;line-height:16px;letter-spacing:0.044px;">control and to create new custom</span>
<span class="t " style="left:455.9px;top:219px;font-size:12px;color:#595959;line-height:16px;letter-spacing:-0.128px;">rules.</span>
</div>
<div class="b" style="left:0px;top:984px;width:1280px;height:40px;background:#66c8ea;border-top:1px solid #2d6f8c;border-left:1px solid #2a7394;border-bottom:1px solid #2f7896;"></div>
<div class="b" style="left:1px;top:985px;width:1279px;height:1px;background:#8ed5ef;"></div>
<div class="b" style="left:140px;top:985px;width:60px;height:39px;background:#69caeb;border-left:1px solid #2f718e;border-right:1px solid #2f718e;"></div>
<div class="b" style="left:202px;top:985px;width:61px;height:39px;background:#69caeb;border-left:1px solid #2f718e;border-right:1px solid #2f718e;"></div>
<div class="b" style="left:264px;top:985px;width:61px;height:39px;background:#a6daf2;border-left:1px solid #2f718e;border-right:1px solid #2f718e;"></div>
<div class="b" style="left:326px;top:985px;width:55px;height:39px;background:#69caeb;border-left:1px solid #2f718e;border-right:1px solid #2f718e;"></div>
<div class="b" style="left:387px;top:985px;width:61px;height:39px;background:#69caeb;border-left:1px solid #2f718e;border-right:1px solid #2f718e;"></div>
<svg style="left:30px;top:987px" width="34" height="34" viewBox="0 0 34 34"><rect x="1.500" y="1.500" width="13" height="27" fill="#2a86c9" stroke="#d9f1fb" stroke-width="1.200"/><rect x="1.500" y="9.500" width="13" height="1.500" fill="#d9f1fb"/><path d="M12 17.500V15.500H22V17.500" fill="none" stroke="#e8f5fb" stroke-width="1.500"/><rect x="5.500" y="17.500" width="26" height="15" rx="1" fill="#7f8a93" stroke="#e8f5fb" stroke-width="1.200"/><path d="M9 23.500H28" stroke="#e8f5fb" stroke-width="1.600"/><circle cx="9" cy="23.500" r="1.600" fill="#e8f5fb"/><circle cx="28" cy="23.500" r="1.600" fill="#e8f5fb"/></svg>
<svg style="left:94px;top:992px" width="30" height="23" viewBox="0 0 30 23"><defs><linearGradient id="psg" x1="0" y1="0" x2="1" y2="1"><stop offset="0" stop-color="#4aa0da"/><stop offset="1" stop-color="#1b4f93"/></linearGradient></defs><path d="M6 1H29L24 21.500H1Z" fill="url(#psg)" stroke="#8cc8ec" stroke-width="1"/><path d="M9 5L17 11L7 17.500" fill="none" stroke="#e6f4fc" stroke-width="2.400"/><path d="M15 18H22" stroke="#cfe6f5" stroke-width="2"/></svg>
<svg style="left:154px;top:991px" width="33" height="30" viewBox="0 0 33 30"><defs><linearGradient id="exg" x1="0" y1="0" x2="0" y2="1"><stop offset="0" stop-color="#fbeeb0"/><stop offset="1" stop-color="#f1cf6a"/></linearGradient></defs><path d="M0.500 2H13L15 4H32V10H0.500Z" fill="#edd48a"/><rect x="3" y="2" width="4" height="2.200" fill="#5f9a4a"/><rect x="11" y="3.200" width="4" height="2.200" fill="#8b6a3a"/><rect x="20" y="4.200" width="4" height="2.200" fill="#5f8a5a"/><rect x="0.500" y="6" width="31.500" height="20.500" fill="url(#exg)"/><path d="M4.500 28.500V17C4.500 16 5 15.500 6 15.500H26.500C27.500 15.500 28 16 28 17V28.500H23V21.500H10V28.500Z" fill="#8fcbee" stroke="#bfe3f6" stroke-width="0.800"/><rect x="6" y="16.500" width="20.500" height="2.500" fill="#c9e8f8"/></svg>
<svg style="left:214px;top:986px" width="36" height="35" viewBox="0 0 36 35"><ellipse cx="18" cy="14" rx="15.500" ry="13" fill="#e9eef0" stroke="#333" stroke-width="1.500"/><ellipse cx="18" cy="9.500" rx="9.500" ry="5" fill="#38c3d6" stroke="#222" stroke-width="1"/><path d="M13.500 8l2 2 1.500-2M19 8l2 2 1.500-2" fill="none" stroke="#11323a" stroke-width="1.300"/><path d="M5.500 16C8 26 28 26 30.500 16C24 19 12 19 5.500 16Z" fill="#fff" stroke="#222" stroke-width="1.300"/><path d="M10 18.500V23M14 19V24.500M18 19.200V25M22 19V24.500M26 18.500V23M7 20.800C13 23 23 23 29 20.800" stroke="#222" stroke-width="1" fill="none"/><path d="M6 26H30L33 33H3Z" fill="#d9dcdd" stroke="#444" stroke-width="1"/><rect x="5" y="29" width="7" height="2" fill="#c33d6b"/><path d="M19 27v5" stroke="#222" stroke-width="1.500"/></svg>
<svg style="left:279px;top:988.5px" width="32" height="31" viewBox="0 0 32 31"><path d="M18.300 8.800H25.300V6.800H23.300L27.200 2.800L31 6.800H29V21H21V31.500L18.300 28.500ZM20.800 11.300V18.500H26.300V11.300Z" fill="#fff" stroke="#4a2f6a" stroke-width="0.900" transform="translate(0,-1.500)"/><rect x="21.200" y="10.200" width="4.600" height="6.300" fill="#9fc3d8" opacity=".6"/><path d="M0 3.200L18.300 0V31L0 27.800Z" fill="#74389a"/><path d="M0 3.200L9 1.600V29.400L0 27.800Z" fill="#5e3a94" opacity=".55"/><path d="M6.800 8.800H9.500V21.300H6.800Z" fill="#fff"/></svg>
<svg style="left:337px;top:987px" width="33" height="32" viewBox="0 0 33 32"><path d="M28.300 21.500A11 11 0 1 1 29.300 14.500" fill="none" stroke="#2c8fd0" stroke-width="7"/><path d="M28.300 21.500A11 11 0 1 1 29.300 14.500" fill="none" stroke="#52b8ea" stroke-width="5"/><path d="M9 14.300H31.800V18.800H9Z" fill="#3fa9e2"/><path d="M9 14.800H31.500" stroke="#2c8fd0" stroke-width="0.800"/><path d="M9 18.600H30.800" stroke="#2c8fd0" stroke-width="0.800"/><path d="M1.500 29.500C-2 23 5 9.500 17 3.500C24 0 29.500 0.500 31 4C29 2.300 25 2.800 20 5.500C10 11 3.500 22 4.800 27.500Z" fill="#f2cb3d" stroke="#f8e38c" stroke-width="0.600"/></svg>
<svg style="left:403px;top:988px" width="31" height="32" viewBox="0 0 31 32"><rect x="16" y="4" width="14" height="22.500" fill="#fff" stroke="#d5e8dc" stroke-width="0.600"/><rect x="19.500" y="6.3" width="4" height="2" fill="#1e7145"/><rect x="24.800" y="6.3" width="4" height="2" fill="#1e7145"/><rect x="19.500" y="9.6" width="4" height="2" fill="#1e7145"/><rect x="24.800" y="9.6" width="4" height="2" fill="#1e7145"/><rect x="19.500" y="12.9" width="4" height="2" fill="#1e7145"/><rect x="24.800" y="12.9" width="4" height="2" fill="#1e7145"/><rect x="19.500" y="16.2" width="4" height="2" fill="#1e7145"/><rect x="24.800" y="16.2" width="4" height="2" fill="#1e7145"/><rect x="19.500" y="19.5" width="4" height="2" fill="#1e7145"/><rect x="24.800" y="19.5" width="4" height="2" fill="#1e7145"/><rect x="19.500" y="22.8" width="4" height="2" fill="#1e7145"/><rect x="24.800" y="22.8" width="4" height="2" fill="#1e7145"/><path d="M0 3.200L18.300 0V31L0 27.800Z" fill="#1e7145"/><path d="M4.800 9.500L8.300 15.500L4.500 21.800H7.500L9.800 17.600L12.100 21.800H15.100L11.300 15.500L14.800 9.500H11.900L9.800 13.500L7.700 9.500Z" fill="#fff"/></svg>
<svg style="left:1066px;top:1001px" width="9" height="6" viewBox="0 0 9 6"><path d="M0 5.500L4.500 0.500L9 5.500Z" fill="#1a1a1a"/></svg>
<svg style="left:1086.500px;top:995.500px" width="17" height="17" viewBox="0 0 17 17"><path d="M2 1V16" stroke="#2a3a44" stroke-width="1.300"/><path d="M2.800 2.200H9V4H15.500L13.300 6.800L15.500 9.800H8.500V8H2.800Z" fill="#fff" stroke="#2a3a44" stroke-width="0.900"/></svg>
<svg style="left:1111px;top:995.500px" width="17" height="17" viewBox="0 0 17 17"><rect x="5" y="2" width="10.500" height="8" fill="#fff" stroke="#2a3a44" stroke-width="1"/><rect x="7" y="4" width="6.500" height="4" fill="#9fd6ee" stroke="#2a3a44" stroke-width="0.500"/><path d="M10 10V13M6.500 13.500H14" stroke="#2a3a44" stroke-width="1.200" fill="none"/><rect x="0.800" y="1" width="3.600" height="5" rx="1" fill="#fff" stroke="#2a3a44" stroke-width="0.900"/><path d="M2.600 6V15H9" stroke="#2a3a44" stroke-width="1" fill="none"/><path d="M5.500 15H10" stroke="#fff" stroke-width="2"/></svg>
<svg style="left:1135px;top:996.500px" width="18" height="17" viewBox="0 0 18 17"><path d="M1.500 5.500H4L8 1.500V14.500L4 10.500H1.500Z" fill="#fff" stroke="#3a4a54" stroke-width="0.900"/><path d="M5.200 4.500V11.500" stroke="#8a979f" stroke-width="0.800"/><circle cx="12" cy="11" r="4.200" fill="#d9343f" stroke="#f6c9cc" stroke-width="0.700"/><path d="M10.200 9.200L13.800 12.800M13.800 9.200L10.200 12.800" stroke="#fff" stroke-width="1.400"/></svg>
<span class="t " style="left:1164.9px;top:996.5px;font-size:12px;color:#0f2430;line-height:16px;letter-spacing:-0.3px;transform:scaleX(0.9132);transform-origin:0 50%;">ENG</span>
<span class="t " style="left:1208.4px;top:987.5px;font-size:12px;color:#0f2430;line-height:16px;letter-spacing:-0.238px;">1:38 AM</span>
<span class="t " style="left:1204.3000000000002px;top:1004.9px;font-size:12px;color:#0f2430;line-height:16px;letter-spacing:-0.21px;">1/21/2013</span>
</div></body></html>
